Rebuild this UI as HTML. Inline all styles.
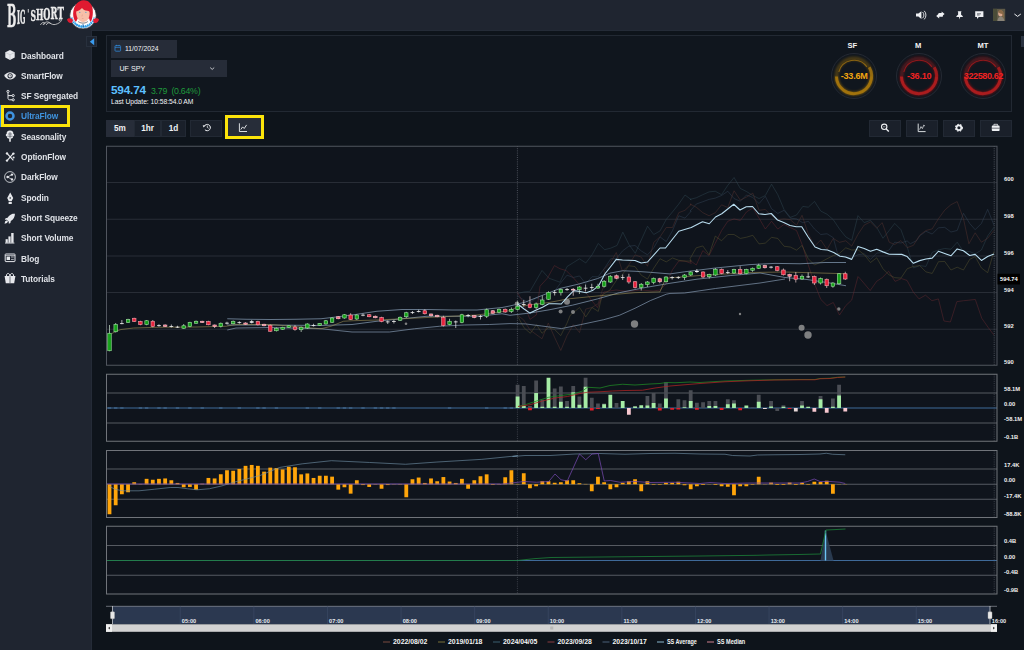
<!DOCTYPE html>
<html lang="en"><head><meta charset="utf-8"><title>UltraFlow</title>
<style>
html,body{margin:0;padding:0}
body{width:1024px;height:650px;overflow:hidden;position:relative;background:#0e141b;font-family:"Liberation Sans",sans-serif;color:#e4e7ec}
.abs{position:absolute}
#hdr{left:0;top:0;width:1024px;height:30.8px;background:#1f2530;border-bottom:1px solid #242b37;box-sizing:border-box}
#side{left:0;top:30px;width:92px;height:620px;background:#1f2530;border-right:1px solid #242b37;box-sizing:border-box}
.nav{position:absolute;left:20.5px;font-size:9px;font-weight:bold;color:#dfe2e7;letter-spacing:-0.1px;white-space:nowrap;line-height:10px;transform:scaleX(0.925);transform-origin:0 0}
.nav.act{color:#3f93df}
#toppanel{left:106px;top:35.2px;width:906px;height:76.6px;box-sizing:border-box;border:1px solid #222933;background:#10161e}
.inp{background:#262c38;box-sizing:border-box}
.btn{position:absolute;top:120.3px;height:16.4px;background:#1a202a;border:1px solid #222934;box-sizing:border-box;color:#f0f2f5;font-size:8.2px;font-weight:bold;text-align:center;line-height:16.2px}
svg{font-family:"Liberation Sans",sans-serif}
</style></head><body>
<div id="hdr" class="abs"></div>
<div id="side" class="abs">
  <div class="abs" style="left:0;top:74.5px;width:1.2px;height:22.5px;background:#2f8ee0"></div>
  <div class="nav" style="top:20.60px">Dashboard</div>
  <div class="nav" style="top:40.89px">SmartFlow</div>
  <div class="nav" style="top:61.18px">SF Segregated</div>
  <div class="nav act" style="top:81.47px">UltraFlow</div>
  <div class="nav" style="top:101.76px">Seasonality</div>
  <div class="nav" style="top:122.05px">OptionFlow</div>
  <div class="nav" style="top:142.34px">DarkFlow</div>
  <div class="nav" style="top:162.63px">Spodin</div>
  <div class="nav" style="top:182.92px">Short Squeeze</div>
  <div class="nav" style="top:203.21px">Short Volume</div>
  <div class="nav" style="top:223.50px">Blog</div>
  <div class="nav" style="top:243.79px">Tutorials</div>
</div>
<!-- highlight box around active nav -->
<div class="abs" style="left:1px;top:104.5px;width:69px;height:22.5px;box-sizing:border-box;border:3.6px solid #fce40a"></div>
<!-- collapse button -->
<div class="abs" style="left:86.2px;top:36.2px;width:10.8px;height:10.8px;box-sizing:border-box;background:#1e2531;border:1px solid #28303d"></div>

<div id="toppanel" class="abs"></div>
<div class="abs inp" style="left:111px;top:40px;width:66.2px;height:17.5px"></div>
<div class="abs" style="left:125px;top:44.6px;font-size:6.8px;color:#f2f4f7;line-height:8px;white-space:nowrap">11/07/2024</div>
<div class="abs inp" style="left:111px;top:60.3px;width:116px;height:16.6px"></div>
<div class="abs" style="left:119.5px;top:65.1px;font-size:7.1px;color:#f2f4f7;line-height:9px;white-space:nowrap">UF SPY</div>
<div class="abs" style="left:111px;top:83.5px;font-size:11.8px;font-weight:bold;color:#5cc0ff;line-height:13px;letter-spacing:-0.2px;white-space:nowrap">594.74</div>
<div class="abs" style="left:151px;top:86.2px;font-size:8.8px;color:#1f9a3c;line-height:10px;white-space:nowrap;letter-spacing:-0.27px">3.79&nbsp; (0.64%)</div>
<div class="abs" style="left:111px;top:98.2px;font-size:6.75px;color:#f2f4f7;line-height:8px;white-space:nowrap;letter-spacing:-0.05px">Last Update: 10:58:54.0 AM</div>

<!-- gauge labels -->
<div class="abs" style="left:832.3px;top:40.8px;width:40px;text-align:center;font-size:7.6px;font-weight:bold;color:#f4f4f4;line-height:9px">SF</div>
<div class="abs" style="left:898.2px;top:40.8px;width:40px;text-align:center;font-size:7.6px;font-weight:bold;color:#f4f4f4;line-height:9px">M</div>
<div class="abs" style="left:963px;top:40.8px;width:40px;text-align:center;font-size:7.6px;font-weight:bold;color:#f4f4f4;line-height:9px">MT</div>

<!-- toolbar buttons -->
<div class="btn" style="left:106px;width:27.8px;background:#272d39;border-color:#272d39">5m</div>
<div class="btn" style="left:133.8px;width:27.6px">1hr</div>
<div class="btn" style="left:161.3px;width:24.6px">1d</div>
<div class="btn" style="left:190.3px;width:32.2px"></div>
<div class="btn" style="left:227.5px;width:33.5px;top:118.2px;height:18.2px;background:#272d39;border-color:#272d39"></div>
<div class="abs" style="left:224.6px;top:114.9px;width:39.3px;height:24.2px;box-sizing:border-box;border:3.7px solid #fce40a"></div>
<div class="btn" style="left:869px;width:32px"></div>
<div class="btn" style="left:906px;width:32px"></div>
<div class="btn" style="left:943px;width:32px"></div>
<div class="btn" style="left:979.5px;width:32.5px"></div>
<!-- right scroll nub -->
<div class="abs" style="left:1020.5px;top:36px;width:3.5px;height:11px;background:#2a3240"></div>

<svg class="abs" style="left:0;top:0" width="1024" height="650" viewBox="0 0 1024 650">
<!-- LOGO -->
<filter id="fat" x="-5%" y="-5%" width="110%" height="110%"><feMorphology operator="dilate" radius="0.3 0.05"/></filter>
<g fill="#ececec" stroke="#ececec" stroke-width="0.35" filter="url(#fat)" style="font-family:'DejaVu Serif','Liberation Serif',serif;font-stretch:condensed;font-weight:bold">
  <g transform="translate(7.1,26.9) scale(0.385,1)"><text x="0" y="0" font-size="32">B</text></g>
  <g transform="translate(17,23.9) skewY(-3) scale(0.376,1)"><text x="0" y="0" font-size="18.8">IG</text></g>
  <g transform="translate(27.3,18.6) scale(0.6,1)"><text x="0" y="0" font-size="12" stroke="none">'</text></g>
  <g transform="translate(30.5,20.5) scale(0.56,1)"><text x="0" y="0"><tspan font-size="15">S</tspan><tspan font-size="15.600" dy="-0.45">H</tspan><tspan font-size="16.200" dy="-0.45">O</tspan><tspan font-size="16.800" dy="-0.45">R</tspan><tspan font-size="17.200" dy="-0.55">T</tspan></text></g>
</g>
<path d="M40.6,24.6 c0.8,-1.6 2.4,-2.6 3.8,-2 c1,0.5 0.6,1.9 -0.5,1.6 M43.2,24.6 c1.6,-2.8 4.4,-3.4 6.4,-1.800 c1.800,1.400 3.800,2.200 6,1.600 c2.800,-0.800 5,-2.200 5.800,-3.800 c0.600,-1.500 -1.200,-2.400 -2.200,-1.400 c-0.800,0.900 0,1.900 0.900,1.500 M46.400,24.600 c0.900,-1.900 2.900,-2.300 4,-1.400" fill="none" stroke="#dcdcdc" stroke-width="0.800" stroke-linecap="round"/>
<!-- mascot -->
<g>
  <circle cx="83" cy="15.600" r="13.300" fill="#fcfcfc" stroke="#15181e" stroke-width="0.700"/>
  <path d="M71.400,17.600 a12,12 0 0 0 23.200,0" fill="none" stroke="#2f9fe8" stroke-width="2.300" stroke-dasharray="1.500,0.700"/>
  <path d="M74.800,22.600 a10,10 0 0 0 16.400,0" fill="none" stroke="#2f9fe8" stroke-width="1.600" stroke-dasharray="1.200,0.800"/>
  <path d="M67,19.600 c1,-1.600 3.600,-1.800 5.600,-0.400 c0.600,1.600 0,3.200 -1.400,3.800 c-2,0.400 -3.800,-1.200 -4.200,-3.400 z" fill="#e01a30"/>
  <path d="M99,19.600 c-1,-1.600 -3.600,-1.800 -5.600,-0.400 c-0.600,1.600 0,3.200 1.400,3.800 c2,0.400 3.800,-1.200 4.200,-3.400 z" fill="#e01a30"/>
  <path d="M75.600,21.800 c-2.600,-3.200 -3.200,-8.800 -1.600,-13.400 c1.400,-4.200 4.400,-7.600 9.200,-8.200 c4.600,-0.400 7.800,2.600 9,6.600 c1.200,4.400 0.800,10.800 -1.400,15 c-0.800,-0.800 -1.400,-2 -1.600,-3.400 l-11.600,0 c-0.400,1.400 -1,2.600 -2,3.400 z" fill="#e01a30"/>
  <path d="M76.200,11.600 c2,-0.600 4.200,-1.800 5.800,-3.600 c1,1.600 3,2.600 5.400,2.800 c1.400,0.200 2,0.600 2.200,1.600 c0.200,2.400 -0.400,5 -1.600,6.800 c-1.200,1.700 -2.900,2.700 -4.800,2.700 c-2,0 -3.900,-1.200 -5.200,-3 c-1.300,-2 -1.900,-4.800 -1.800,-7.300 z" fill="#f7bfa8"/>
  <path d="M78.200,21.600 c1.600,1 3.200,1.500 4.800,1.500 c1.700,0 3.300,-0.500 4.800,-1.500" fill="none" stroke="#3a2420" stroke-width="0.600"/>
  <circle cx="79.800" cy="12.300" r="0.650" fill="#4f9ac8"/><circle cx="85.900" cy="12.300" r="0.650" fill="#4f9ac8"/>
  <path d="M82.400,14.500 l-0.500,2 M81.900,18.500 l1.600,0" stroke="#d8907c" stroke-width="0.500" fill="none"/>
  <path d="M83,24.200 l0.300,2.800" stroke="#1a6ab0" stroke-width="1"/>
</g>
<!-- header icons -->
<g fill="#eef0f3" stroke="none">
  <path d="M916,13.6 l2.4,0 l3,-2.4 l0,7.8 l-3,-2.4 l-2.4,0 z"/>
  <path d="M922.6,12 a4.4,4.4 0 0 1 0,6.2 M924.2,10.8 a6.2,6.2 0 0 1 0,8.6" fill="none" stroke="#eef0f3" stroke-width="0.9"/>
  <path d="M936.2,15.9 l3,-2.6 l0,1.7 l3.6,0 l0,1.8 l-3.6,0 l0,1.7 z" />
  <path d="M944.6,14 l-3,-2.6 l0,1.7 l-3,0 l0,1.8 l3,0 l0,1.7 z" />
  <path d="M957.6,11.2 l4,0 l-0.5,0.9 l0,2.6 c1,0.5 1.7,1.3 1.8,2.3 l-2.7,0 l-0.6,2.6 l-0.6,-2.6 l-2.7,0 c0.1,-1 0.8,-1.8 1.8,-2.3 l0,-2.6 z"/>
  <path d="M975.2,11.2 l8.2,0 l0,5.8 l-4.6,0 l-1.8,1.9 l0,-1.9 l-1.8,0 z"/>
</g>
<path d="M977,13.8 l4,0 M977,15 l2.6,0" stroke="#1f2530" stroke-width="0.6"/>
<rect x="993" y="8.8" width="12.2" height="12.2" fill="#5f5a48"/>
<rect x="993" y="8.8" width="4" height="12.2" fill="#4a4c38"/>
<ellipse cx="1000.6" cy="13.6" rx="2.4" ry="3" fill="#d8a890"/>
<path d="M997.4,21 c0.4,-3 1.8,-4.4 3.4,-4.4 c1.8,0 3.2,1.4 3.6,4.4 z" fill="#8a8478"/>
<path d="M998,12 c0.4,-2.6 4.6,-3 5.6,0.6 c0.6,2.4 0.2,5 -0.6,6.4 l-0.8,-5 c-1.2,0 -3,-0.8 -4.2,-2 z" fill="#8a6a48"/>
<path d="M1014.4,14 l3.2,2.4 l3.2,-2.4" fill="none" stroke="#eef0f3" stroke-width="1"/>
<!-- collapse triangle -->
<path d="M94.2,38.2 l0,7 l-4.4,-3.5 z" fill="#3a9bee"/>
<!-- calendar icon -->
<rect x="115" y="45.6" width="5.6" height="5.6" rx="0.8" fill="none" stroke="#2f86d6" stroke-width="0.8"/>
<path d="M115,47.4 l5.6,0 M116.5,44.8 l0,1.4 M119.1,44.8 l0,1.4" stroke="#2f86d6" stroke-width="0.7"/>
<!-- select chevron -->
<path d="M210.2,67.6 l2,1.8 l2,-1.8" fill="none" stroke="#e8eaee" stroke-width="0.8"/>
<!-- sidebar icons -->
<g fill="#e6e8ec" stroke="none">
  <!-- cube -->
  <path d="M10,50 l4.7,2.3 l0,5.3 l-4.7,2.4 l-4.7,-2.4 l0,-5.3 z"/>
  <path d="M5.6,52.6 l4.4,2.2 l4.4,-2.2 M10,54.8 l0,5" fill="none" stroke="#aeb3bb" stroke-width="0.5"/>
  <!-- eye -->
  <path d="M4.2,75.8 c2.6,-4.8 9.2,-4.8 11.8,0 c-2.6,4.8 -9.2,4.8 -11.8,0 z"/>
  <circle cx="10.1" cy="75.8" r="2.6" fill="#1f2530"/>
  <circle cx="10.1" cy="75.8" r="1.7" fill="#e6e8ec"/>
  <path d="M10.1,74.6 l0,1.3 l1,0" stroke="#1f2530" stroke-width="0.5" fill="none"/>
</g>
<!-- branch icon (SF Segregated) -->
<g fill="none" stroke="#e6e8ec" stroke-width="1">
  <path d="M8,92.6 l0,5.6 c0,1 0.6,1.6 1.6,1.6 l2.6,0 M8,95.6 l4.2,0"/>
  <circle cx="8" cy="91.4" r="1.1"/><circle cx="13.2" cy="95.6" r="1.1"/><circle cx="13.2" cy="99.8" r="1.1"/>
</g>
<!-- UltraFlow ring -->
<circle cx="10" cy="116" r="3.5" fill="none" stroke="#3f93df" stroke-width="2.5"/>
<!-- Seasonality (tree) -->
<g fill="#e6e8ec">
  <path d="M10,130.6 c2.4,0 3.6,1.4 3.2,2.8 c1.4,0.6 1.4,2.6 -0.2,3.2 c0.4,1.4 -1,2.2 -2.2,1.6 l0,3.6 l-1.6,0 l0,-3.6 c-1.2,0.6 -2.6,-0.2 -2.2,-1.6 c-1.6,-0.6 -1.6,-2.6 -0.2,-3.2 c-0.4,-1.4 0.8,-2.8 3.2,-2.8 z"/>
</g>
<path d="M8,134 l4,0 M7.4,136.2 l5.2,0 M10,132 l0,6" stroke="#1f2530" stroke-width="0.5"/>
<!-- OptionFlow (x nodes) -->
<g stroke="#e6e8ec" stroke-width="1.2" fill="#e6e8ec">
  <path d="M7,153.4 l6.4,7 M13.2,153.6 l-6.2,7" fill="none"/>
  <circle cx="7" cy="153.4" r="1.2" stroke="none"/><circle cx="13.4" cy="153.6" r="1.2" stroke="none"/><circle cx="7" cy="160.6" r="1.2" stroke="none"/><circle cx="13.6" cy="157.6" r="1" stroke="none"/>
</g>
<!-- DarkFlow (share in circle) -->
<circle cx="10" cy="177" r="5.4" fill="none" stroke="#e6e8ec" stroke-width="0.8"/>
<g fill="#e6e8ec"><circle cx="7.6" cy="177" r="1.2"/><circle cx="12" cy="174.6" r="1.2"/><circle cx="12" cy="179.4" r="1.2"/></g>
<path d="M12,174.6 l-4.4,2.4 l4.4,2.4" fill="none" stroke="#e6e8ec" stroke-width="0.7"/>
<!-- Spodin (pen nib) -->
<path d="M10.2,192.6 l3,5.4 l-1.6,3.2 l-2.8,0 l-1.6,-3.2 z M8.6,202 l3.2,0 l0,2 l-3.2,0 z" fill="#e6e8ec"/>
<circle cx="10.2" cy="198" r="0.8" fill="#1f2530"/>
<!-- rocket -->
<path d="M15,213.2 c-3.4,0.2 -5.8,2 -7.4,4.6 l-2,0.4 l-0.8,1.6 l2,0 l2,2 l0,2 l1.6,-0.8 l0.4,-2 c2.6,-1.6 4.2,-4 4.2,-7.800 z" fill="#e6e8ec"/>
<path d="M5.2,221.200 l1.800,-1 l1,1 l-1,1.800 l-2.400,0.800 z" fill="#e6e8ec"/>
<!-- short volume bars -->
<g fill="#e6e8ec"><rect x="5.6" y="239.2" width="2.2" height="3.600"/><rect x="8.4" y="236.400" width="2.2" height="6.4"/><rect x="11.2" y="233" width="2.4" height="9.8"/><rect x="5" y="242.600" width="9.4" height="0.900"/></g>
<!-- blog -->
<rect x="5.2" y="254" width="9.800" height="7.600" rx="0.6" fill="none" stroke="#e6e8ec" stroke-width="1"/>
<rect x="6.600" y="256.600" width="3.400" height="3.400" fill="#e6e8ec"/><path d="M11,257 l2.800,0 M11,259.400 l2.800,0 M5.200,255.600 l9.800,0" stroke="#e6e8ec" stroke-width="0.700"/>
<!-- tutorials (box/bag) -->
<path d="M4.600,276 l10.800,0 l-1.200,7.200 l-8.400,0 z" fill="#e6e8ec"/>
<path d="M6.400,276 c0,-3.400 3.200,-3.400 3.600,0 c0.400,-3.400 3.600,-3.400 3.600,0" fill="none" stroke="#e6e8ec" stroke-width="1"/>
<path d="M10,276.400 l0,6.600" stroke="#1f2530" stroke-width="0.600"/>
<!-- toolbar icons -->
<path d="M204.300,126.400 A3.150,3.150 0 1 1 204.900,129.700" fill="none" stroke="#eef0f3" stroke-width="1"/>
<path d="M207.300,125.500 l0,2 l1.300,0.800" fill="none" stroke="#eef0f3" stroke-width="0.750"/>
<path d="M202.700,125.200 l2.600,0.300 l-1.700,2 z" fill="#eef0f3"/>
<path d="M239.400,123.300 l0,8.200 l7.600,0" fill="none" stroke="#eef0f3" stroke-width="0.900"/>
<path d="M240.800,129.500 l1.800,-2.600 l1.600,1.600 l2.400,-3.600" fill="none" stroke="#eef0f3" stroke-width="0.900"/>
<!-- zoom -->
<circle cx="884.200" cy="126.800" r="2.700" fill="none" stroke="#eef0f3" stroke-width="1.100"/>
<path d="M886.200,128.900 l2.600,2.600" stroke="#eef0f3" stroke-width="1.400"/>
<path d="M883,126.800 l2.400,0" stroke="#eef0f3" stroke-width="0.600"/>
<!-- chart2 -->
<path d="M918.200,123.600 l0,8 l7.400,0" fill="none" stroke="#eef0f3" stroke-width="0.900"/>
<path d="M919.600,129.600 l1.400,-3 l1.400,2 l1.400,-3.600 l1.200,1.200" fill="none" stroke="#eef0f3" stroke-width="0.700"/>
<!-- gear -->
<circle cx="958.900" cy="127.800" r="2.400" fill="none" stroke="#eef0f3" stroke-width="1.700"/>
<circle cx="958.900" cy="127.800" r="3.500" fill="none" stroke="#eef0f3" stroke-width="1.100" stroke-dasharray="1.450,1.450"/>
<!-- briefcase -->
<rect x="991.800" y="125.600" width="7.800" height="5.400" rx="0.800" fill="#eef0f3"/>
<path d="M993.900,125.600 l0,-1.300 l3.600,0 l0,1.300" fill="none" stroke="#eef0f3" stroke-width="0.800"/>
<path d="M991.800,128.200 l7.800,0" stroke="#1a202a" stroke-width="0.600"/>
<!-- gauges -->
<g fill="none">
  <circle cx="854" cy="76" r="22.500" stroke="#2a2f39" stroke-width="0.800"/>
  <circle cx="919" cy="76" r="22.500" stroke="#2a2f39" stroke-width="0.800"/>
  <circle cx="983" cy="76" r="22.500" stroke="#2a2f39" stroke-width="0.800"/>
</g>
<defs>
  <filter id="gl" x="-30%" y="-30%" width="160%" height="160%"><feGaussianBlur stdDeviation="1.100"/></filter>
</defs>
<g fill="none" stroke-linecap="butt">
  <g stroke="#cf8f0c">
    <circle cx="854" cy="76" r="17.300" stroke-width="4.200" stroke-opacity="0.280" filter="url(#gl)"/>
    <path d="M836.4,76.5 A17.600,17.600 0 1 0 869.24,67.20" stroke-width="3" stroke-opacity="0.600"/>
    <path d="M836.4,76.5 A17.600,17.600 0 0 0 871.6,76.5" stroke-width="3.600" stroke-opacity="0.250" filter="url(#gl)"/>
    <path d="M838.8,72 A15.800,15.800 0 0 1 866.90,66.90" stroke-width="1.100" stroke-opacity="0.550"/>
  </g>
  <g stroke="#dc1a1a">
    <circle cx="919" cy="76" r="17.300" stroke-width="4.200" stroke-opacity="0.280" filter="url(#gl)"/>
    <path d="M901.4,76.5 A17.600,17.600 0 1 0 934.24,67.20" stroke-width="3" stroke-opacity="0.600"/>
    <path d="M901.4,76.5 A17.600,17.600 0 0 0 936.6,76.5" stroke-width="3.600" stroke-opacity="0.250" filter="url(#gl)"/>
    <path d="M903.8,72 A15.800,15.800 0 0 1 931.90,66.90" stroke-width="1.100" stroke-opacity="0.550"/>
  </g>
  <g stroke="#dc1a1a">
    <circle cx="983" cy="76" r="17.300" stroke-width="4.200" stroke-opacity="0.280" filter="url(#gl)"/>
    <path d="M965.4,76.5 A17.600,17.600 0 1 0 998.24,67.20" stroke-width="3" stroke-opacity="0.600"/>
    <path d="M965.4,76.5 A17.600,17.600 0 0 0 1000.6,76.5" stroke-width="3.600" stroke-opacity="0.250" filter="url(#gl)"/>
    <path d="M967.8,72 A15.800,15.800 0 0 1 995.90,66.90" stroke-width="1.100" stroke-opacity="0.550"/>
  </g>
</g>
<g font-weight="bold" font-size="9.100" text-anchor="middle">
  <text x="854.200" y="78.600" fill="#f0a510" letter-spacing="-0.200">-33.6M</text>
  <text x="919.200" y="78.600" fill="#ee2222" letter-spacing="-0.200">-36.10</text>
  <text x="983.400" y="78.600" fill="#ee2222" letter-spacing="-0.420">322580.62</text>
</g>

<rect x="106" y="146" width="891" height="219.5" fill="#0f141c"/>
<line x1="106" x2="997" y1="182.5" y2="182.5" stroke="#282d36" stroke-width="1"/>
<line x1="106" x2="997" y1="219.25" y2="219.25" stroke="#282d36" stroke-width="1"/>
<line x1="106" x2="997" y1="256" y2="256" stroke="#282d36" stroke-width="1"/>
<line x1="106" x2="997" y1="292.5" y2="292.5" stroke="#282d36" stroke-width="1"/>
<line x1="106" x2="997" y1="329.25" y2="329.25" stroke="#282d36" stroke-width="1"/>
<line x1="517.4" x2="517.4" y1="146" y2="365.5" stroke="#5a606a" stroke-width="0.8" stroke-dasharray="1,1.2"/>
<line x1="994.2" x2="994.2" y1="146" y2="365.5" stroke="#5a606a" stroke-width="0.8" stroke-dasharray="1,1.2"/>
<polyline points="517.5,293.75 523.75,291.9 530,291.25 542.03,270.47 549.06,278.28 560,282.19 567.03,266.56 573.28,262.66 579.53,258.75 585.78,262.97 592.03,254.84 598.28,243.44 604.53,249.69 610.78,248.12 617.03,245.47 622.81,232.19 629.06,244.69 635.31,253.28 641.25,240 647.5,226.25 653.75,234.53 660,230.94 666.25,219.38 672.5,211.88 678.75,204.06 685,195 691.25,199.69 690,199.38 696.25,197.81 702.81,194.69 709.06,191.88 715.31,191.25 721.56,194.69 727.81,185.31 734.06,177.5 740.31,188.44 746.56,191.56 752.81,195.47 759.06,198.59 765.31,195.47 771.56,184.22 777.81,194.69 784.06,209.53 790.31,217.34 796.56,215 802.81,206.41 808.28,207.19 814.53,201.41 820.78,211.09 827.03,214.22 833.28,219.69 839.53,229.06 845.78,236.88 851.72,240.31 857.97,215.62 864.22,222.66 870.47,220.31 876.72,227.34 882.97,238.28 889.22,230.47 894.69,223.44 900.94,229.69 907.19,246.88 913.44,267.97 919.69,265.62 925.94,266.41 932.19,252.34 938.44,250 944.69,248.44 950.94,249.22 957.19,242.19 963.44,251.56 969.69,251.56 975.16,253.91 981.41,250 987.66,235.94 993.91,227.34" fill="none" stroke="#314a55" stroke-width="0.9" stroke-opacity="0.5" stroke-linejoin="round" />
<polyline points="517.5,296 524,300 530,303 536,298 542,300 548,296 554,292 560,283.75 567.03,275.16 573.28,277.5 579.53,275.94 585.78,283.75 592.03,276.72 598.28,276.72 604.53,268.12 610.78,258.75 616.25,258.75 622.5,250.94 628.75,246.25 635,245.47 641.25,250.94 647.5,254.84 653.75,247.81 660,236.88 666.25,241.56 672.5,230.62 678.75,215.78 685,218.12 691.25,211.09 690,211.09 696.25,204.06 702.81,201.72 709.06,199.38 715.31,198.12 721.56,195.47 727.81,191.25 734.06,198.59 740.31,201.25 746.56,195 752.81,197.5 759.06,203.59 765.31,196.25 771.56,208.75 777.81,213.44 784.06,210.31 790.31,218.12 796.56,218.91 802.81,222.81 808.28,221.25 814.53,229.06 820.78,234.53 827.03,233.75 833.28,237.66 837.66,254.06 845.78,257.19 851.72,257.81 857.97,254.69 864.22,253.91 870.47,259.38 876.72,253.12 882.97,252.34 889.22,250 894.69,242.19 900.94,242.97 907.19,240.94 910.31,243.75 916.56,240.62 919.69,235.94 925.94,231.25 932.19,234.06 938.44,227.81 944.69,227.34 950.94,232.03 957.19,230.47 963.44,213.28 969.69,223.44 975.16,229.69 981.41,223.44 987.66,209.38 993.91,225" fill="none" stroke="#35465a" stroke-width="0.9" stroke-opacity="0.5" stroke-linejoin="round" />
<polyline points="517.5,292.5 523.75,303.75 530,319.4 536.25,315 540,286.25 547.5,278 554.4,265.6 560,268.75 566.25,270.6 572.5,276.9 578.75,283.75 585,291.25 591.25,300 597.5,307.5 603.75,292 616,290 628,291.5 641,290 653,291 660,290 666.25,283.75 672.5,269.69 678.75,261.09 685,261.09 691.25,263.44 690,260.31 696.25,265 702.81,250.62 709.06,255.62 715.31,243.12 721.56,230.62 727.81,221.25 734.06,218.91 740.31,220.47 746.56,211.88 752.81,207.97 759.06,218.12 765.31,229.06 771.56,221.25 777.81,229.06 784.06,224.38 790.31,227.5 796.56,230.62 802.81,246.25 808.28,265 814.53,283.75 820.78,299.38 827.03,305.62 833.28,302.5 839.53,315 845.78,305.62 851.72,300 857.97,276.56 860,278.6 870.15,290.59 876.61,281.37 882.14,277.68 888.6,271.22 895.06,281.37 901.51,278.6 907.05,280.44 913.51,292.44 919.04,298.89 925.5,295.2 931.96,300.74 938.41,298.89 943.95,321.03 950.41,321.96 956.86,301.66 963.32,300.74 968.86,300.18 975.31,299.45 981.77,318.27 988.23,327.49 993.76,334.87" fill="none" stroke="#6a2a30" stroke-width="0.9" stroke-opacity="0.5" stroke-linejoin="round" />
<polyline points="517.5,315 523.75,320 530,330 542.03,338.75 548.28,323.12 554.53,337.19 560.78,350.47 567.03,335.62 573.28,324.69 579.53,332.5 585.78,309.06 592.03,307.5 598.28,303.59 602.19,290.31 606.88,279.38 603.75,269.69 610,263.44 616.25,252.5 622.5,271.25 628.75,265 635,254.84 641.25,257.19 647.5,266.25 653.75,242.34 660,236.88 666.25,227.5 672.5,227.5 678.75,212.66 685,210.31 691.25,204.38 690,204.06 696.25,207.19 702.81,212.66 709.06,215.78 715.31,212.66 721.56,204.84 727.81,207.5 734.06,190.78 740.31,200.16 746.56,197.03 752.81,193.12 759.06,210.31 765.31,209.53 771.56,215.78 777.81,219.69 784.06,218.91 790.31,219.69 796.56,225.16 802.03,215.31 808.28,233.75 814.53,246.25 820.78,240 827.03,249.38 833.28,238.44 839.53,242.34 845.78,240.78 851.72,246.09 857.97,234.38 864.22,225 870.47,221.88 876.72,228.12 882.19,222.66 889.22,242.19 894.69,244.53 900.94,240.62 907.19,247.66 913.44,245.31 919.69,235.16 925.94,230.47 932.19,228.91 938.44,218.75 944.69,210.16 950.94,204.69 957.19,201.56 963.44,218.75 968.91,243.75 975.16,232.81 981.41,242.19 987.66,238.28 993.91,230.47" fill="none" stroke="#5a3530" stroke-width="0.9" stroke-opacity="0.5" stroke-linejoin="round" />
<polyline points="517.5,316 524.06,327.81 530.31,333.28 536.56,324.69 542.03,333.28 548.28,327.81 554.53,329.38 560.78,335.62 567.03,323.12 570.16,315.31 579.53,307.5 585.78,316.88 592.03,307.5 598.28,311.41 602.19,295 610,290 616.25,280.62 622.5,274.38 628.75,265.78 635,266.56 641.25,275.16 647.5,279.06 653.75,268.12 660,258.75 666.25,261.88 672.5,257.97 678.75,260.31 685,261.09 691.25,261.09 690,258.75 696.25,247.81 702.81,245.94 709.06,254.84 715.31,236.09 721.56,240.78 727.81,234.53 734.06,234.53 740.31,238.44 746.56,237.19 752.81,235.31 759.06,243.91 765.31,243.12 771.56,237.34 777.81,238.44 784.06,246.25 790.31,247.03 796.56,250.16 802.03,245.47 808.28,258.75 814.53,265 820.78,262.19 827.03,258.75 833.28,255.62 839.53,253.28 845.78,247.81 851.72,250 857.97,249.69 864.22,254.69 870.47,262.5 876.72,257.81 882.97,268.75 889.22,275 894.69,277.66 900.94,278.12 907.19,268.75 913.44,266.41 919.69,265.62 925.94,271.88 932.19,273.44 938.44,261.72 944.69,261.41 950.94,270 957.19,267.19 963.44,270 969.69,259.38 975.16,256.56 981.41,267.97 987.66,272.66 993.91,251.56" fill="none" stroke="#5e5830" stroke-width="0.9" stroke-opacity="0.5" stroke-linejoin="round" />
<polyline points="227.25,318.75 246,319.25 271,319.5 296,319.25 321,318.75 336,317 352,315 377,311.25 402,309.5 427,309.5 452,310 477,310 502,307.5 510,305.94 525.62,302.03 541.25,295.78 560,288.44 578.75,284.06 597.5,278.59 610,273.12 622.5,270.78 635,271.25 650.62,272.34 670,273.91 684.6,271.8 715.4,268 750,264.6 775,263.4 800,263.75 825,262.5 846,262.5" fill="none" stroke="#8fa6bf" stroke-width="0.8" stroke-opacity="0.85" stroke-linejoin="round" />
<polyline points="227.25,325 271,325 321,325.5 352,324.5 377,321.25 402,318.75 427,316.25 452,316.25 477,316.25 502,313.75 510,315.31 530.31,312.97 549.06,309.84 572.5,305.16 597.5,298.91 619.38,292.66 642.81,287.97 670,283.28 697,279.2 730.8,275.5 760,273 785,277.5 807,279.5 830,283 846,285.75" fill="none" stroke="#8fa6bf" stroke-width="0.8" stroke-opacity="0.85" stroke-linejoin="round" />
<polyline points="227.25,330 236,328 271,327.5 321,328.75 352,332 389.5,332 414.5,328.75 439.5,326.25 464.5,325 489.5,324.5 510,323.59 525.62,323.91 541.25,325.94 561.56,328.59 580.31,324.69 603.75,319.69 619.38,315.31 635,308.28 650.62,300.47 666.25,294.22 670,293.44 684.6,293 715.4,288.5 760,283 785,279" fill="none" stroke="#8fa6bf" stroke-width="0.8" stroke-opacity="0.8" stroke-linejoin="round" />
<polyline points="111.5,333.75 116,331.25 121,329.5 133.5,328 158.5,327.25 196,327 226,326.25 236,324.5 271,324.5 321,328.75 331,326.25 343.5,321.25 352,320.75 377,320 427,317.5 477,315 510,310.62 517.81,306.72 533.44,304.38 549.06,302.5 567.81,298.91 588.12,296.88 611.56,294.69 635,292.66 660,291.88 663.91,282.5 666.25,278.59 670,277.81 700,275.5 750,272.5 785,272 846,273.75" fill="none" stroke="#a89858" stroke-width="0.65" stroke-opacity="0.85" stroke-linejoin="round" />
<circle cx="517" cy="303.75" r="2.3" fill="#9a9a9a" fill-opacity="0.8"/>
<circle cx="567" cy="301.7" r="3" fill="#9a9a9a" fill-opacity="0.8"/>
<circle cx="560.6" cy="311.5" r="2" fill="#9a9a9a" fill-opacity="0.8"/>
<circle cx="573" cy="312" r="2" fill="#9a9a9a" fill-opacity="0.8"/>
<circle cx="634.5" cy="324" r="3.7" fill="#9a9a9a" fill-opacity="0.8"/>
<circle cx="740" cy="314" r="1.2" fill="#9a9a9a" fill-opacity="0.8"/>
<circle cx="838.8" cy="309" r="1.7" fill="#9a9a9a" fill-opacity="0.8"/>
<circle cx="801.6" cy="327.7" r="3" fill="#9a9a9a" fill-opacity="0.8"/>
<circle cx="808" cy="335" r="3.7" fill="#9a9a9a" fill-opacity="0.8"/>
<circle cx="406" cy="323.75" r="1.3" fill="#9a9a9a" fill-opacity="0.8"/>
<polyline points="517.5,303.75 523.75,308.75 530,313.1 536.25,310 542.5,307.25 548.75,303.75 555,303.75 561.25,304 567.5,296.9 573.75,290.6 580,291.5 586.25,292.75 592.5,290.6 598.75,285.6 605,273.75 610,267.5 616.25,259.4 622.5,260 635,260.5 641.25,263 647.5,262 660,248 665.5,248 678.75,231.25 691.25,227.5 702.5,221.75 709.25,223.75 715.5,217 721.75,213.75 733.75,204.25 740,210 746.25,206.75 752.5,206.5 758.75,213.75 765,214.5 771.25,213.5 777.5,220 783.75,222.5 790,225.5 796.25,226.75 801.75,226.75 808,236.75 815,247 821.25,249.5 827.5,250 833.75,252.5 840,256.25 845.47,257.03 851.72,259.38 857.97,246.41 864.22,248.44 870.47,251.25 876.72,249.22 882.97,251.88 889.22,254.22 901.72,254.38 907.19,256.56 913.44,263.28 919.69,260.62 925.94,259.06 932.19,258.12 938.44,251.25 944.69,253.59 950.94,255.78 957.19,248.91 963.44,250.78 969.69,255.47 975.16,254.38 981.41,260.47 987.66,256.56 993.91,253.91" fill="none" stroke="#b8dcee" stroke-width="1.1" stroke-opacity="1" stroke-linejoin="round" />
<line x1="109.5" x2="109.5" y1="325" y2="351.25" stroke="#cfe8cf" stroke-width="0.7"/>
<rect x="107.75" y="333.25" width="3.5" height="17.5" fill="#16a01a" stroke="#9fe0a0" stroke-width="0.6"/>
<line x1="115.68" x2="115.68" y1="323" y2="332.5" stroke="#cfe8cf" stroke-width="0.7"/>
<rect x="113.93" y="324.5" width="3.5" height="7.25" fill="#16a01a" stroke="#9fe0a0" stroke-width="0.6"/>
<line x1="121.87" x2="121.87" y1="320" y2="324.25" stroke="#e8e8e8" stroke-width="0.7"/>
<rect x="119.97" y="323.25" width="3.8" height="0.8" fill="#f4f4f4"/>
<line x1="128.05" x2="128.05" y1="318.75" y2="323" stroke="#cfe8cf" stroke-width="0.7"/>
<rect x="126.3" y="319.5" width="3.5" height="3" fill="#16a01a" stroke="#9fe0a0" stroke-width="0.6"/>
<line x1="134.23" x2="134.23" y1="317.75" y2="322" stroke="#f0d0d0" stroke-width="0.7"/>
<rect x="132.48" y="318.25" width="3.5" height="3.25" fill="#e8243e" stroke="#f5a0aa" stroke-width="0.6"/>
<line x1="140.41" x2="140.41" y1="320.75" y2="325.25" stroke="#f0d0d0" stroke-width="0.7"/>
<rect x="138.66" y="321.5" width="3.5" height="3" fill="#e8243e" stroke="#f5a0aa" stroke-width="0.6"/>
<line x1="146.6" x2="146.6" y1="320" y2="325.25" stroke="#cfe8cf" stroke-width="0.7"/>
<rect x="144.85" y="320.75" width="3.5" height="3.75" fill="#16a01a" stroke="#9fe0a0" stroke-width="0.6"/>
<line x1="152.78" x2="152.78" y1="320" y2="327.25" stroke="#f0d0d0" stroke-width="0.7"/>
<rect x="151.03" y="321.25" width="3.5" height="5.25" fill="#e8243e" stroke="#f5a0aa" stroke-width="0.6"/>
<line x1="158.96" x2="158.96" y1="324.25" y2="326.75" stroke="#e8e8e8" stroke-width="0.7"/>
<rect x="157.06" y="325.25" width="3.8" height="0.8" fill="#f4f4f4"/>
<line x1="165.15" x2="165.15" y1="324.25" y2="327" stroke="#f0d8d8" stroke-width="0.7"/>
<rect x="163.4" y="325" width="3.5" height="1.5" fill="#f07080" stroke="#f8c0c8" stroke-width="0.6"/>
<line x1="171.33" x2="171.33" y1="324.5" y2="327.5" stroke="#e8e8e8" stroke-width="0.7"/>
<rect x="169.43" y="326" width="3.8" height="0.8" fill="#f4f4f4"/>
<line x1="177.51" x2="177.51" y1="325.75" y2="328" stroke="#e8e8e8" stroke-width="0.7"/>
<rect x="175.61" y="326.75" width="3.8" height="0.8" fill="#f4f4f4"/>
<line x1="183.7" x2="183.7" y1="324" y2="328.75" stroke="#cfe8cf" stroke-width="0.7"/>
<rect x="181.95" y="325.75" width="3.5" height="2.5" fill="#16a01a" stroke="#9fe0a0" stroke-width="0.6"/>
<line x1="189.88" x2="189.88" y1="321.75" y2="327.25" stroke="#cfe8cf" stroke-width="0.7"/>
<rect x="188.13" y="322.5" width="3.5" height="4" fill="#16a01a" stroke="#9fe0a0" stroke-width="0.6"/>
<line x1="196.06" x2="196.06" y1="320.5" y2="323.75" stroke="#cfe8cf" stroke-width="0.7"/>
<rect x="194.31" y="321.25" width="3.5" height="2" fill="#16a01a" stroke="#9fe0a0" stroke-width="0.6"/>
<line x1="202.25" x2="202.25" y1="320.75" y2="323" stroke="#f0d8d8" stroke-width="0.7"/>
<rect x="200.5" y="321.25" width="3.5" height="1.25" fill="#f07080" stroke="#f8c0c8" stroke-width="0.6"/>
<line x1="208.43" x2="208.43" y1="320.75" y2="325.25" stroke="#f0d0d0" stroke-width="0.7"/>
<rect x="206.68" y="321.5" width="3.5" height="3.25" fill="#e8243e" stroke="#f5a0aa" stroke-width="0.6"/>
<line x1="214.61" x2="214.61" y1="324.5" y2="328" stroke="#f0d8d8" stroke-width="0.7"/>
<rect x="212.86" y="325" width="3.5" height="1.5" fill="#f07080" stroke="#f8c0c8" stroke-width="0.6"/>
<line x1="220.79" x2="220.79" y1="322.5" y2="327.5" stroke="#cfe8cf" stroke-width="0.7"/>
<rect x="219.04" y="323.25" width="3.5" height="3.25" fill="#16a01a" stroke="#9fe0a0" stroke-width="0.6"/>
<line x1="226.98" x2="226.98" y1="321.75" y2="324.5" stroke="#e8e8e8" stroke-width="0.7"/>
<rect x="225.08" y="322.75" width="3.8" height="0.8" fill="#f4f4f4"/>
<line x1="233.16" x2="233.16" y1="320.5" y2="324.25" stroke="#cfe8cf" stroke-width="0.7"/>
<rect x="231.41" y="321.25" width="3.5" height="2.5" fill="#16a01a" stroke="#9fe0a0" stroke-width="0.6"/>
<line x1="239.34" x2="239.34" y1="321.25" y2="323.75" stroke="#e8e8e8" stroke-width="0.7"/>
<rect x="237.44" y="322.25" width="3.8" height="0.8" fill="#f4f4f4"/>
<line x1="245.53" x2="245.53" y1="322.25" y2="324.75" stroke="#f0d8d8" stroke-width="0.7"/>
<rect x="243.78" y="323" width="3.5" height="1.25" fill="#f07080" stroke="#f8c0c8" stroke-width="0.6"/>
<line x1="251.71" x2="251.71" y1="320" y2="323.5" stroke="#e8e8e8" stroke-width="0.7"/>
<rect x="249.81" y="321.25" width="3.8" height="1.5" fill="#f4f4f4"/>
<line x1="257.89" x2="257.89" y1="320.75" y2="325.5" stroke="#f0d0d0" stroke-width="0.7"/>
<rect x="256.14" y="321.5" width="3.5" height="3.25" fill="#e8243e" stroke="#f5a0aa" stroke-width="0.6"/>
<line x1="264.07" x2="264.07" y1="323.75" y2="326.25" stroke="#f0d8d8" stroke-width="0.7"/>
<rect x="262.32" y="324.25" width="3.5" height="1.5" fill="#f07080" stroke="#f8c0c8" stroke-width="0.6"/>
<line x1="270.26" x2="270.26" y1="324.5" y2="332" stroke="#f0d0d0" stroke-width="0.7"/>
<rect x="268.51" y="325.25" width="3.5" height="6" fill="#e8243e" stroke="#f5a0aa" stroke-width="0.6"/>
<line x1="276.44" x2="276.44" y1="327.5" y2="331.5" stroke="#cfe8cf" stroke-width="0.7"/>
<rect x="274.69" y="328.25" width="3.5" height="2.5" fill="#16a01a" stroke="#9fe0a0" stroke-width="0.6"/>
<line x1="282.62" x2="282.62" y1="326.75" y2="329.75" stroke="#cfe8cf" stroke-width="0.7"/>
<rect x="280.87" y="327.25" width="3.5" height="2" fill="#16a01a" stroke="#9fe0a0" stroke-width="0.6"/>
<line x1="288.81" x2="288.81" y1="325.25" y2="328" stroke="#cfe8cf" stroke-width="0.7"/>
<rect x="287.06" y="325.75" width="3.5" height="1.75" fill="#16a01a" stroke="#9fe0a0" stroke-width="0.6"/>
<line x1="294.99" x2="294.99" y1="325" y2="330.75" stroke="#f0d0d0" stroke-width="0.7"/>
<rect x="293.24" y="327" width="3.5" height="2.5" fill="#e8243e" stroke="#f5a0aa" stroke-width="0.6"/>
<line x1="301.17" x2="301.17" y1="326.5" y2="332" stroke="#cfe8cf" stroke-width="0.7"/>
<rect x="299.42" y="327.25" width="3.5" height="2.5" fill="#16a01a" stroke="#9fe0a0" stroke-width="0.6"/>
<line x1="307.36" x2="307.36" y1="323.25" y2="328.75" stroke="#cfe8cf" stroke-width="0.7"/>
<rect x="305.61" y="324" width="3.5" height="4" fill="#16a01a" stroke="#9fe0a0" stroke-width="0.6"/>
<line x1="313.54" x2="313.54" y1="323.75" y2="326.5" stroke="#e8e8e8" stroke-width="0.7"/>
<rect x="311.64" y="325.25" width="3.8" height="0.8" fill="#f4f4f4"/>
<line x1="319.72" x2="319.72" y1="323" y2="325.75" stroke="#cfe8cf" stroke-width="0.7"/>
<rect x="317.97" y="323.5" width="3.5" height="1.75" fill="#16a01a" stroke="#9fe0a0" stroke-width="0.6"/>
<line x1="325.9" x2="325.9" y1="320" y2="324.5" stroke="#cfe8cf" stroke-width="0.7"/>
<rect x="324.15" y="320.75" width="3.5" height="3.25" fill="#16a01a" stroke="#9fe0a0" stroke-width="0.6"/>
<line x1="332.09" x2="332.09" y1="317.25" y2="323" stroke="#cfe8cf" stroke-width="0.7"/>
<rect x="330.34" y="318" width="3.5" height="4.25" fill="#16a01a" stroke="#9fe0a0" stroke-width="0.6"/>
<line x1="338.27" x2="338.27" y1="316" y2="319.25" stroke="#f0d8d8" stroke-width="0.7"/>
<rect x="336.52" y="316.75" width="3.5" height="2" fill="#f07080" stroke="#f8c0c8" stroke-width="0.6"/>
<line x1="344.45" x2="344.45" y1="314" y2="318.75" stroke="#cfe8cf" stroke-width="0.7"/>
<rect x="342.7" y="314.75" width="3.5" height="3.25" fill="#16a01a" stroke="#9fe0a0" stroke-width="0.6"/>
<line x1="350.64" x2="350.64" y1="313.25" y2="320" stroke="#f0d0d0" stroke-width="0.7"/>
<rect x="348.89" y="315" width="3.5" height="4.5" fill="#e8243e" stroke="#f5a0aa" stroke-width="0.6"/>
<line x1="356.82" x2="356.82" y1="314.25" y2="320" stroke="#cfe8cf" stroke-width="0.7"/>
<rect x="355.07" y="315" width="3.5" height="4" fill="#16a01a" stroke="#9fe0a0" stroke-width="0.6"/>
<line x1="363" x2="363" y1="313.5" y2="316.25" stroke="#e8e8e8" stroke-width="0.7"/>
<rect x="361.1" y="314.75" width="3.8" height="0.8" fill="#f4f4f4"/>
<line x1="369.19" x2="369.19" y1="314" y2="317.25" stroke="#f0d0d0" stroke-width="0.7"/>
<rect x="367.44" y="314.75" width="3.5" height="2" fill="#e8243e" stroke="#f5a0aa" stroke-width="0.6"/>
<line x1="375.37" x2="375.37" y1="315.5" y2="318.25" stroke="#f0d8d8" stroke-width="0.7"/>
<rect x="373.62" y="316.25" width="3.5" height="1.5" fill="#f07080" stroke="#f8c0c8" stroke-width="0.6"/>
<line x1="381.55" x2="381.55" y1="316.75" y2="322.25" stroke="#f0d0d0" stroke-width="0.7"/>
<rect x="379.8" y="317.5" width="3.5" height="4" fill="#e8243e" stroke="#f5a0aa" stroke-width="0.6"/>
<line x1="387.74" x2="387.74" y1="320.5" y2="324" stroke="#e8e8e8" stroke-width="0.7"/>
<rect x="385.84" y="321.5" width="3.8" height="0.8" fill="#f4f4f4"/>
<line x1="393.92" x2="393.92" y1="320" y2="323.5" stroke="#e8e8e8" stroke-width="0.7"/>
<rect x="392.02" y="321" width="3.8" height="0.8" fill="#f4f4f4"/>
<line x1="400.1" x2="400.1" y1="316.5" y2="321" stroke="#cfe8cf" stroke-width="0.7"/>
<rect x="398.35" y="317.25" width="3.5" height="3" fill="#16a01a" stroke="#9fe0a0" stroke-width="0.6"/>
<line x1="406.28" x2="406.28" y1="311.75" y2="318" stroke="#cfe8cf" stroke-width="0.7"/>
<rect x="404.53" y="312.75" width="3.5" height="4" fill="#16a01a" stroke="#9fe0a0" stroke-width="0.6"/>
<line x1="412.47" x2="412.47" y1="311" y2="314" stroke="#e8e8e8" stroke-width="0.7"/>
<rect x="410.57" y="312.25" width="3.8" height="0.8" fill="#f4f4f4"/>
<line x1="418.65" x2="418.65" y1="309.75" y2="312.5" stroke="#e8e8e8" stroke-width="0.7"/>
<rect x="416.75" y="311" width="3.8" height="0.8" fill="#f4f4f4"/>
<line x1="424.83" x2="424.83" y1="309.25" y2="314.5" stroke="#f0d0d0" stroke-width="0.7"/>
<rect x="423.08" y="310.75" width="3.5" height="3" fill="#e8243e" stroke="#f5a0aa" stroke-width="0.6"/>
<line x1="431.02" x2="431.02" y1="313.5" y2="316.5" stroke="#f0d8d8" stroke-width="0.7"/>
<rect x="429.27" y="314" width="3.5" height="1.75" fill="#f07080" stroke="#f8c0c8" stroke-width="0.6"/>
<line x1="437.2" x2="437.2" y1="314.75" y2="317.25" stroke="#f0d8d8" stroke-width="0.7"/>
<rect x="435.45" y="315.25" width="3.5" height="1.5" fill="#f07080" stroke="#f8c0c8" stroke-width="0.6"/>
<line x1="443.38" x2="443.38" y1="315.75" y2="326.5" stroke="#f0d0d0" stroke-width="0.7"/>
<rect x="441.63" y="317.5" width="3.5" height="8" fill="#e8243e" stroke="#f5a0aa" stroke-width="0.6"/>
<line x1="449.56" x2="449.56" y1="318.75" y2="325.25" stroke="#cfe8cf" stroke-width="0.7"/>
<rect x="447.81" y="321.25" width="3.5" height="3.25" fill="#16a01a" stroke="#9fe0a0" stroke-width="0.6"/>
<line x1="455.75" x2="455.75" y1="320.5" y2="328" stroke="#e8e8e8" stroke-width="0.7"/>
<rect x="453.85" y="321.5" width="3.8" height="0.8" fill="#f4f4f4"/>
<line x1="461.93" x2="461.93" y1="313.75" y2="323.25" stroke="#cfe8cf" stroke-width="0.7"/>
<rect x="460.18" y="314.75" width="3.5" height="7.75" fill="#16a01a" stroke="#9fe0a0" stroke-width="0.6"/>
<line x1="468.11" x2="468.11" y1="314" y2="317.25" stroke="#e8e8e8" stroke-width="0.7"/>
<rect x="466.21" y="315" width="3.8" height="0.8" fill="#f4f4f4"/>
<line x1="474.3" x2="474.3" y1="315" y2="318.25" stroke="#f0d8d8" stroke-width="0.7"/>
<rect x="472.55" y="315.5" width="3.5" height="2" fill="#f07080" stroke="#f8c0c8" stroke-width="0.6"/>
<line x1="480.48" x2="480.48" y1="315" y2="319.5" stroke="#e8e8e8" stroke-width="0.7"/>
<rect x="478.58" y="316" width="3.8" height="0.8" fill="#f4f4f4"/>
<line x1="486.66" x2="486.66" y1="308.5" y2="318" stroke="#cfe8cf" stroke-width="0.7"/>
<rect x="484.91" y="309.75" width="3.5" height="6.5" fill="#16a01a" stroke="#9fe0a0" stroke-width="0.6"/>
<line x1="492.85" x2="492.85" y1="310" y2="313.75" stroke="#f0d8d8" stroke-width="0.7"/>
<rect x="491.1" y="310.75" width="3.5" height="2.5" fill="#f07080" stroke="#f8c0c8" stroke-width="0.6"/>
<line x1="499.03" x2="499.03" y1="308.5" y2="313.25" stroke="#cfe8cf" stroke-width="0.7"/>
<rect x="497.28" y="309.25" width="3.5" height="3" fill="#16a01a" stroke="#9fe0a0" stroke-width="0.6"/>
<line x1="505.21" x2="505.21" y1="308.5" y2="312.75" stroke="#f0d0d0" stroke-width="0.7"/>
<rect x="503.46" y="309.25" width="3.5" height="2.75" fill="#e8243e" stroke="#f5a0aa" stroke-width="0.6"/>
<line x1="511.39" x2="511.39" y1="307.5" y2="313" stroke="#cfe8cf" stroke-width="0.7"/>
<rect x="509.64" y="309.5" width="3.5" height="2" fill="#16a01a" stroke="#9fe0a0" stroke-width="0.6"/>
<line x1="517.58" x2="517.58" y1="301.25" y2="310.5" stroke="#cfe8cf" stroke-width="0.7"/>
<rect x="515.83" y="306.25" width="3.5" height="3.25" fill="#16a01a" stroke="#9fe0a0" stroke-width="0.6"/>
<line x1="523.76" x2="523.76" y1="300" y2="306.5" stroke="#e8e8e8" stroke-width="0.7"/>
<rect x="521.86" y="304" width="3.8" height="0.8" fill="#f4f4f4"/>
<line x1="529.94" x2="529.94" y1="296.25" y2="308.25" stroke="#f0d0d0" stroke-width="0.7"/>
<rect x="528.19" y="304" width="3.5" height="3.5" fill="#e8243e" stroke="#f5a0aa" stroke-width="0.6"/>
<line x1="536.13" x2="536.13" y1="302.5" y2="309" stroke="#cfe8cf" stroke-width="0.7"/>
<rect x="534.38" y="304" width="3.5" height="3.5" fill="#16a01a" stroke="#9fe0a0" stroke-width="0.6"/>
<line x1="542.31" x2="542.31" y1="295.5" y2="305.25" stroke="#cfe8cf" stroke-width="0.7"/>
<rect x="540.56" y="300" width="3.5" height="4.5" fill="#16a01a" stroke="#9fe0a0" stroke-width="0.6"/>
<line x1="548.49" x2="548.49" y1="291.25" y2="300" stroke="#cfe8cf" stroke-width="0.7"/>
<rect x="546.74" y="292.5" width="3.5" height="6.75" fill="#16a01a" stroke="#9fe0a0" stroke-width="0.6"/>
<line x1="554.68" x2="554.68" y1="290" y2="295.5" stroke="#e8e8e8" stroke-width="0.7"/>
<rect x="552.78" y="292.25" width="3.8" height="0.8" fill="#f4f4f4"/>
<line x1="560.86" x2="560.86" y1="288.5" y2="295.5" stroke="#cfe8cf" stroke-width="0.7"/>
<rect x="559.11" y="289.5" width="3.5" height="3.25" fill="#16a01a" stroke="#9fe0a0" stroke-width="0.6"/>
<line x1="567.04" x2="567.04" y1="288" y2="290.75" stroke="#e8e8e8" stroke-width="0.7"/>
<rect x="565.14" y="289.25" width="3.8" height="0.8" fill="#f4f4f4"/>
<line x1="573.22" x2="573.22" y1="288" y2="295.75" stroke="#f0d8d8" stroke-width="0.7"/>
<rect x="571.47" y="289.25" width="3.5" height="0.8" fill="#f07080" stroke="#f8c0c8" stroke-width="0.6"/>
<line x1="579.41" x2="579.41" y1="286" y2="294" stroke="#cfe8cf" stroke-width="0.7"/>
<rect x="577.66" y="287" width="3.5" height="2.75" fill="#16a01a" stroke="#9fe0a0" stroke-width="0.6"/>
<line x1="585.59" x2="585.59" y1="284.5" y2="291.5" stroke="#e8e8e8" stroke-width="0.7"/>
<rect x="583.69" y="287.75" width="3.8" height="0.8" fill="#f4f4f4"/>
<line x1="591.77" x2="591.77" y1="283.75" y2="290" stroke="#e8e8e8" stroke-width="0.7"/>
<rect x="589.87" y="287.25" width="3.8" height="0.8" fill="#f4f4f4"/>
<line x1="597.96" x2="597.96" y1="283.75" y2="289" stroke="#cfe8cf" stroke-width="0.7"/>
<rect x="596.21" y="286.25" width="3.5" height="1.75" fill="#16a01a" stroke="#9fe0a0" stroke-width="0.6"/>
<line x1="604.14" x2="604.14" y1="280" y2="287.5" stroke="#cfe8cf" stroke-width="0.7"/>
<rect x="602.39" y="281.25" width="3.5" height="5" fill="#16a01a" stroke="#9fe0a0" stroke-width="0.6"/>
<line x1="610.32" x2="610.32" y1="275" y2="283" stroke="#cfe8cf" stroke-width="0.7"/>
<rect x="608.57" y="276.25" width="3.5" height="5.75" fill="#16a01a" stroke="#9fe0a0" stroke-width="0.6"/>
<line x1="616.51" x2="616.51" y1="274.5" y2="279.25" stroke="#f0d8d8" stroke-width="0.7"/>
<rect x="614.76" y="275.75" width="3.5" height="2.5" fill="#f07080" stroke="#f8c0c8" stroke-width="0.6"/>
<line x1="622.69" x2="622.69" y1="274.5" y2="280" stroke="#e8e8e8" stroke-width="0.7"/>
<rect x="620.79" y="277.25" width="3.8" height="0.8" fill="#f4f4f4"/>
<line x1="628.87" x2="628.87" y1="273.75" y2="283.75" stroke="#f0d0d0" stroke-width="0.7"/>
<rect x="627.12" y="277" width="3.5" height="5" fill="#e8243e" stroke="#f5a0aa" stroke-width="0.6"/>
<line x1="635.05" x2="635.05" y1="281" y2="288.5" stroke="#f0d0d0" stroke-width="0.7"/>
<rect x="633.3" y="281.75" width="3.5" height="5.75" fill="#e8243e" stroke="#f5a0aa" stroke-width="0.6"/>
<line x1="641.24" x2="641.24" y1="283" y2="290.5" stroke="#cfe8cf" stroke-width="0.7"/>
<rect x="639.49" y="284.25" width="3.5" height="3.25" fill="#16a01a" stroke="#9fe0a0" stroke-width="0.6"/>
<line x1="647.42" x2="647.42" y1="281" y2="287" stroke="#cfe8cf" stroke-width="0.7"/>
<rect x="645.67" y="282" width="3.5" height="2.5" fill="#16a01a" stroke="#9fe0a0" stroke-width="0.6"/>
<line x1="653.6" x2="653.6" y1="277.5" y2="284.25" stroke="#cfe8cf" stroke-width="0.7"/>
<rect x="651.85" y="278.25" width="3.5" height="4.25" fill="#16a01a" stroke="#9fe0a0" stroke-width="0.6"/>
<line x1="659.79" x2="659.79" y1="277.75" y2="283.25" stroke="#f0d8d8" stroke-width="0.7"/>
<rect x="658.04" y="278.75" width="3.5" height="3" fill="#f07080" stroke="#f8c0c8" stroke-width="0.6"/>
<line x1="665.97" x2="665.97" y1="276.25" y2="282.5" stroke="#cfe8cf" stroke-width="0.7"/>
<rect x="664.22" y="277" width="3.5" height="4.75" fill="#16a01a" stroke="#9fe0a0" stroke-width="0.6"/>
<line x1="672.15" x2="672.15" y1="276.25" y2="279.5" stroke="#e8e8e8" stroke-width="0.7"/>
<rect x="670.25" y="277.25" width="3.8" height="0.8" fill="#f4f4f4"/>
<line x1="678.34" x2="678.34" y1="276.25" y2="279" stroke="#e8e8e8" stroke-width="0.7"/>
<rect x="676.44" y="277.25" width="3.8" height="0.8" fill="#f4f4f4"/>
<line x1="684.52" x2="684.52" y1="274" y2="280" stroke="#cfe8cf" stroke-width="0.7"/>
<rect x="682.77" y="275" width="3.5" height="2.5" fill="#16a01a" stroke="#9fe0a0" stroke-width="0.6"/>
<line x1="690.7" x2="690.7" y1="271.25" y2="276" stroke="#cfe8cf" stroke-width="0.7"/>
<rect x="688.95" y="272" width="3.5" height="3" fill="#16a01a" stroke="#9fe0a0" stroke-width="0.6"/>
<line x1="696.88" x2="696.88" y1="269" y2="273" stroke="#e8e8e8" stroke-width="0.7"/>
<rect x="694.99" y="271" width="3.8" height="1" fill="#f4f4f4"/>
<line x1="703.07" x2="703.07" y1="271.25" y2="278" stroke="#f0d0d0" stroke-width="0.7"/>
<rect x="701.32" y="272" width="3.5" height="5" fill="#e8243e" stroke="#f5a0aa" stroke-width="0.6"/>
<line x1="709.25" x2="709.25" y1="273.75" y2="278.5" stroke="#cfe8cf" stroke-width="0.7"/>
<rect x="707.5" y="274.5" width="3.5" height="2.25" fill="#16a01a" stroke="#9fe0a0" stroke-width="0.6"/>
<line x1="715.43" x2="715.43" y1="268" y2="276" stroke="#cfe8cf" stroke-width="0.7"/>
<rect x="713.68" y="269.25" width="3.5" height="5.75" fill="#16a01a" stroke="#9fe0a0" stroke-width="0.6"/>
<line x1="721.62" x2="721.62" y1="268.5" y2="274.25" stroke="#f0d0d0" stroke-width="0.7"/>
<rect x="719.87" y="269.25" width="3.5" height="4.25" fill="#e8243e" stroke="#f5a0aa" stroke-width="0.6"/>
<line x1="727.8" x2="727.8" y1="270" y2="274" stroke="#e8e8e8" stroke-width="0.7"/>
<rect x="725.9" y="272.25" width="3.8" height="0.8" fill="#f4f4f4"/>
<line x1="733.98" x2="733.98" y1="268.75" y2="273.75" stroke="#cfe8cf" stroke-width="0.7"/>
<rect x="732.23" y="269.5" width="3.5" height="3.5" fill="#16a01a" stroke="#9fe0a0" stroke-width="0.6"/>
<line x1="740.17" x2="740.17" y1="266.25" y2="274.5" stroke="#f0d0d0" stroke-width="0.7"/>
<rect x="738.42" y="269.5" width="3.5" height="4.25" fill="#e8243e" stroke="#f5a0aa" stroke-width="0.6"/>
<line x1="746.35" x2="746.35" y1="268.75" y2="274.25" stroke="#cfe8cf" stroke-width="0.7"/>
<rect x="744.6" y="269.5" width="3.5" height="4" fill="#16a01a" stroke="#9fe0a0" stroke-width="0.6"/>
<line x1="752.53" x2="752.53" y1="267.5" y2="271.75" stroke="#cfe8cf" stroke-width="0.7"/>
<rect x="750.78" y="268.25" width="3.5" height="2" fill="#16a01a" stroke="#9fe0a0" stroke-width="0.6"/>
<line x1="758.72" x2="758.72" y1="263.75" y2="269" stroke="#cfe8cf" stroke-width="0.7"/>
<rect x="756.97" y="265.5" width="3.5" height="2.75" fill="#16a01a" stroke="#9fe0a0" stroke-width="0.6"/>
<line x1="764.9" x2="764.9" y1="264.75" y2="268.5" stroke="#f0d8d8" stroke-width="0.7"/>
<rect x="763.15" y="265.5" width="3.5" height="2.25" fill="#f07080" stroke="#f8c0c8" stroke-width="0.6"/>
<line x1="771.08" x2="771.08" y1="266" y2="268.5" stroke="#e8e8e8" stroke-width="0.7"/>
<rect x="769.18" y="266.75" width="3.8" height="0.8" fill="#f4f4f4"/>
<line x1="777.26" x2="777.26" y1="266" y2="271.25" stroke="#f0d0d0" stroke-width="0.7"/>
<rect x="775.51" y="266.75" width="3.5" height="3.75" fill="#e8243e" stroke="#f5a0aa" stroke-width="0.6"/>
<line x1="783.45" x2="783.45" y1="268.5" y2="275.5" stroke="#f0d0d0" stroke-width="0.7"/>
<rect x="781.7" y="270" width="3.5" height="4.75" fill="#e8243e" stroke="#f5a0aa" stroke-width="0.6"/>
<line x1="789.63" x2="789.63" y1="273.75" y2="281.25" stroke="#f0d8d8" stroke-width="0.7"/>
<rect x="787.88" y="274.5" width="3.5" height="1.75" fill="#f07080" stroke="#f8c0c8" stroke-width="0.6"/>
<line x1="795.81" x2="795.81" y1="272" y2="282.5" stroke="#f0d0d0" stroke-width="0.7"/>
<rect x="794.06" y="275.5" width="3.5" height="3.75" fill="#e8243e" stroke="#f5a0aa" stroke-width="0.6"/>
<line x1="802" x2="802" y1="274.5" y2="279.75" stroke="#cfe8cf" stroke-width="0.7"/>
<rect x="800.25" y="276.25" width="3.5" height="2.75" fill="#16a01a" stroke="#9fe0a0" stroke-width="0.6"/>
<line x1="808.18" x2="808.18" y1="272.5" y2="278" stroke="#e8e8e8" stroke-width="0.7"/>
<rect x="806.28" y="276.5" width="3.8" height="0.8" fill="#f4f4f4"/>
<line x1="814.36" x2="814.36" y1="275.5" y2="285" stroke="#f0d0d0" stroke-width="0.7"/>
<rect x="812.61" y="276.5" width="3.5" height="6.5" fill="#e8243e" stroke="#f5a0aa" stroke-width="0.6"/>
<line x1="820.54" x2="820.54" y1="277.5" y2="284.5" stroke="#cfe8cf" stroke-width="0.7"/>
<rect x="818.79" y="278.5" width="3.5" height="4.5" fill="#16a01a" stroke="#9fe0a0" stroke-width="0.6"/>
<line x1="826.73" x2="826.73" y1="278.5" y2="288" stroke="#f0d0d0" stroke-width="0.7"/>
<rect x="824.98" y="279.25" width="3.5" height="6.5" fill="#e8243e" stroke="#f5a0aa" stroke-width="0.6"/>
<line x1="832.91" x2="832.91" y1="282.25" y2="287.75" stroke="#cfe8cf" stroke-width="0.7"/>
<rect x="831.16" y="283" width="3.5" height="3.25" fill="#16a01a" stroke="#9fe0a0" stroke-width="0.6"/>
<line x1="839.09" x2="839.09" y1="273" y2="284.5" stroke="#cfe8cf" stroke-width="0.7"/>
<rect x="837.34" y="273.75" width="3.5" height="10" fill="#16a01a" stroke="#9fe0a0" stroke-width="0.6"/>
<line x1="845.28" x2="845.28" y1="271.75" y2="280" stroke="#f0d0d0" stroke-width="0.7"/>
<rect x="843.53" y="273.75" width="3.5" height="5.25" fill="#e8243e" stroke="#f5a0aa" stroke-width="0.6"/>
<rect x="106.5" y="146.25" width="890.5" height="219.0" fill="none" stroke="#50555e" stroke-width="1"/>
<rect x="106" y="374.25" width="891" height="67.0" fill="#0f141c"/>
<line x1="106" x2="997" y1="393" y2="393" stroke="#565a61" stroke-width="1"/>
<line x1="106" x2="997" y1="423" y2="423" stroke="#565a61" stroke-width="1"/>
<line x1="517.4" x2="517.4" y1="374.25" y2="441.25" stroke="#474c55" stroke-width="0.8" stroke-dasharray="1,1.2"/>
<line x1="994.2" x2="994.2" y1="374.25" y2="441.25" stroke="#474c55" stroke-width="0.8" stroke-dasharray="1,1.2"/>
<line x1="106" x2="997" y1="408" y2="408" stroke="#3f6a99" stroke-width="1"/>
<rect x="107.8" y="407.4" width="3.4" height="1.2" fill="#5f8fc0" fill-opacity="0.55"/>
<rect x="113.98" y="407.4" width="3.4" height="1.2" fill="#5f8fc0" fill-opacity="0.55"/>
<rect x="120.17" y="407.4" width="3.4" height="1.2" fill="#5f8fc0" fill-opacity="0.55"/>
<rect x="138.72" y="407.4" width="3.4" height="1.2" fill="#5f8fc0" fill-opacity="0.55"/>
<rect x="144.9" y="407.4" width="3.4" height="1.2" fill="#5f8fc0" fill-opacity="0.55"/>
<rect x="157.26" y="407.4" width="3.4" height="1.2" fill="#5f8fc0" fill-opacity="0.55"/>
<rect x="163.45" y="407.4" width="3.4" height="1.2" fill="#5f8fc0" fill-opacity="0.55"/>
<rect x="175.81" y="407.4" width="3.4" height="1.2" fill="#5f8fc0" fill-opacity="0.55"/>
<rect x="188.18" y="407.4" width="3.4" height="1.2" fill="#5f8fc0" fill-opacity="0.55"/>
<rect x="200.55" y="407.4" width="3.4" height="1.2" fill="#5f8fc0" fill-opacity="0.55"/>
<rect x="219.09" y="407.4" width="3.4" height="1.2" fill="#5f8fc0" fill-opacity="0.55"/>
<rect x="237.64" y="407.4" width="3.4" height="1.2" fill="#5f8fc0" fill-opacity="0.55"/>
<rect x="256.19" y="407.4" width="3.4" height="1.2" fill="#5f8fc0" fill-opacity="0.55"/>
<rect x="262.38" y="407.4" width="3.4" height="1.2" fill="#5f8fc0" fill-opacity="0.55"/>
<rect x="274.74" y="407.4" width="3.4" height="1.2" fill="#5f8fc0" fill-opacity="0.55"/>
<rect x="305.66" y="407.4" width="3.4" height="1.2" fill="#5f8fc0" fill-opacity="0.55"/>
<rect x="318.02" y="407.4" width="3.4" height="1.2" fill="#5f8fc0" fill-opacity="0.55"/>
<rect x="336.57" y="407.4" width="3.4" height="1.2" fill="#5f8fc0" fill-opacity="0.55"/>
<rect x="342.75" y="407.4" width="3.4" height="1.2" fill="#5f8fc0" fill-opacity="0.55"/>
<rect x="348.94" y="407.4" width="3.4" height="1.2" fill="#5f8fc0" fill-opacity="0.55"/>
<rect x="361.3" y="407.4" width="3.4" height="1.2" fill="#5f8fc0" fill-opacity="0.55"/>
<rect x="373.67" y="407.4" width="3.4" height="1.2" fill="#5f8fc0" fill-opacity="0.55"/>
<rect x="379.85" y="407.4" width="3.4" height="1.2" fill="#5f8fc0" fill-opacity="0.55"/>
<rect x="386.04" y="407.4" width="3.4" height="1.2" fill="#5f8fc0" fill-opacity="0.55"/>
<rect x="392.22" y="407.4" width="3.4" height="1.2" fill="#5f8fc0" fill-opacity="0.55"/>
<rect x="447.87" y="407.4" width="3.4" height="1.2" fill="#5f8fc0" fill-opacity="0.55"/>
<rect x="484.96" y="407.4" width="3.4" height="1.2" fill="#5f8fc0" fill-opacity="0.55"/>
<rect x="503.51" y="407.4" width="3.4" height="1.2" fill="#5f8fc0" fill-opacity="0.55"/>
<rect x="509.69" y="407.4" width="3.4" height="1.2" fill="#5f8fc0" fill-opacity="0.55"/>
<rect x="515.68" y="384.75" width="3.8" height="23.25" fill="#4a4d54"/>
<rect x="515.68" y="396.5" width="3.8" height="11.5" fill="#a6eca6"/>
<rect x="521.86" y="386" width="3.8" height="22" fill="#4a4d54"/>
<rect x="521.86" y="406" width="3.8" height="2" fill="#a6eca6"/>
<rect x="528.04" y="406" width="3.8" height="2" fill="#4a4d54"/>
<rect x="528.04" y="408" width="3.8" height="2.25" fill="#e0202c"/>
<rect x="534.23" y="380.5" width="3.8" height="27.5" fill="#4a4d54"/>
<rect x="534.23" y="393" width="3.8" height="15" fill="#a6eca6"/>
<rect x="540.41" y="399.75" width="3.8" height="8.25" fill="#4a4d54"/>
<rect x="540.41" y="406.75" width="3.8" height="1.25" fill="#a6eca6"/>
<rect x="546.59" y="377.75" width="3.8" height="30.25" fill="#a6eca6"/>
<rect x="552.78" y="388.5" width="3.8" height="19.5" fill="#4a4d54"/>
<rect x="552.78" y="406.75" width="3.8" height="1.25" fill="#a6eca6"/>
<rect x="558.96" y="386.5" width="3.8" height="21.5" fill="#4a4d54"/>
<rect x="558.96" y="401.75" width="3.8" height="6.25" fill="#a6eca6"/>
<rect x="565.14" y="401" width="3.8" height="7" fill="#4a4d54"/>
<rect x="565.14" y="406.75" width="3.8" height="1.25" fill="#a6eca6"/>
<rect x="571.32" y="386" width="3.8" height="22" fill="#4a4d54"/>
<rect x="571.32" y="392.25" width="3.8" height="15.75" fill="#a6eca6"/>
<rect x="577.51" y="396.5" width="3.8" height="11.5" fill="#4a4d54"/>
<rect x="577.51" y="404.75" width="3.8" height="3.25" fill="#a6eca6"/>
<rect x="583.69" y="377.75" width="3.8" height="30.25" fill="#4a4d54"/>
<rect x="583.69" y="386.75" width="3.8" height="21.25" fill="#a6eca6"/>
<rect x="589.87" y="397.75" width="3.8" height="10.25" fill="#4a4d54"/>
<rect x="589.87" y="408" width="3.8" height="2.5" fill="#e0202c"/>
<rect x="596.06" y="403.5" width="3.8" height="4.5" fill="#4a4d54"/>
<rect x="596.06" y="408" width="3.8" height="1" fill="#e0202c"/>
<rect x="602.24" y="403.5" width="3.8" height="4.5" fill="#4a4d54"/>
<rect x="602.24" y="404.25" width="3.8" height="3.75" fill="#a6eca6"/>
<rect x="608.42" y="394.75" width="3.8" height="13.25" fill="#a6eca6"/>
<rect x="614.61" y="403" width="3.8" height="5" fill="#4a4d54"/>
<rect x="620.79" y="401" width="3.8" height="7" fill="#a6eca6"/>
<rect x="626.97" y="408" width="3.8" height="6.75" fill="#f8c8d0"/>
<rect x="633.15" y="406" width="3.8" height="2" fill="#4a4d54"/>
<rect x="633.15" y="406.5" width="3.8" height="1.5" fill="#a6eca6"/>
<rect x="639.34" y="405.25" width="3.8" height="2.75" fill="#a6eca6"/>
<rect x="645.52" y="396" width="3.8" height="12" fill="#4a4d54"/>
<rect x="645.52" y="405.5" width="3.8" height="2.5" fill="#a6eca6"/>
<rect x="651.7" y="393" width="3.8" height="15" fill="#4a4d54"/>
<rect x="651.7" y="403" width="3.8" height="5" fill="#a6eca6"/>
<rect x="657.89" y="403.5" width="3.8" height="4.5" fill="#4a4d54"/>
<rect x="657.89" y="408" width="3.8" height="2.5" fill="#e0202c"/>
<rect x="664.07" y="382.25" width="3.8" height="25.75" fill="#4a4d54"/>
<rect x="664.07" y="398.5" width="3.8" height="9.5" fill="#a6eca6"/>
<rect x="670.25" y="408" width="3.8" height="1.75" fill="#e0202c"/>
<rect x="676.44" y="399.25" width="3.8" height="8.75" fill="#4a4d54"/>
<rect x="676.44" y="408" width="3.8" height="1.5" fill="#e0202c"/>
<rect x="682.62" y="400.25" width="3.8" height="7.75" fill="#4a4d54"/>
<rect x="682.62" y="407.25" width="3.8" height="0.75" fill="#a6eca6"/>
<rect x="688.8" y="390.25" width="3.8" height="17.75" fill="#4a4d54"/>
<rect x="688.8" y="401" width="3.8" height="7" fill="#a6eca6"/>
<rect x="694.99" y="402.75" width="3.8" height="5.25" fill="#4a4d54"/>
<rect x="694.99" y="408" width="3.8" height="1.75" fill="#e0202c"/>
<rect x="701.17" y="402.25" width="3.8" height="5.75" fill="#4a4d54"/>
<rect x="707.35" y="401" width="3.8" height="7" fill="#4a4d54"/>
<rect x="707.35" y="406" width="3.8" height="2" fill="#a6eca6"/>
<rect x="713.53" y="401" width="3.8" height="7" fill="#4a4d54"/>
<rect x="713.53" y="406" width="3.8" height="2" fill="#a6eca6"/>
<rect x="719.72" y="408" width="3.8" height="2" fill="#e0202c"/>
<rect x="725.9" y="399.25" width="3.8" height="8.75" fill="#4a4d54"/>
<rect x="725.9" y="404.25" width="3.8" height="3.75" fill="#a6eca6"/>
<rect x="732.08" y="400.25" width="3.8" height="7.75" fill="#4a4d54"/>
<rect x="732.08" y="403.5" width="3.8" height="4.5" fill="#a6eca6"/>
<rect x="738.27" y="408" width="3.8" height="2.25" fill="#e0202c"/>
<rect x="744.45" y="405.5" width="3.8" height="2.5" fill="#a6eca6"/>
<rect x="750.63" y="407.25" width="3.8" height="0.75" fill="#4a4d54"/>
<rect x="756.82" y="394.75" width="3.8" height="13.25" fill="#4a4d54"/>
<rect x="756.82" y="401.75" width="3.8" height="6.25" fill="#a6eca6"/>
<rect x="763" y="408" width="3.8" height="1" fill="#e8d8d8"/>
<rect x="769.18" y="401" width="3.8" height="7" fill="#4a4d54"/>
<rect x="769.18" y="406.5" width="3.8" height="1.5" fill="#a6eca6"/>
<rect x="775.36" y="408" width="3.8" height="3" fill="#4a4d54"/>
<rect x="781.55" y="405.25" width="3.8" height="2.75" fill="#4a4d54"/>
<rect x="781.55" y="406.75" width="3.8" height="1.25" fill="#a6eca6"/>
<rect x="787.73" y="408" width="3.8" height="1" fill="#e0202c"/>
<rect x="793.91" y="408" width="3.8" height="3.5" fill="#e8d8d8"/>
<rect x="800.1" y="401" width="3.8" height="7" fill="#4a4d54"/>
<rect x="800.1" y="405.5" width="3.8" height="2.5" fill="#a6eca6"/>
<rect x="806.28" y="406.75" width="3.8" height="1.25" fill="#a6eca6"/>
<rect x="812.46" y="408" width="3.8" height="3.75" fill="#f8c8d0"/>
<rect x="818.64" y="396" width="3.8" height="12" fill="#4a4d54"/>
<rect x="818.64" y="399.25" width="3.8" height="8.75" fill="#a6eca6"/>
<rect x="824.83" y="408" width="3.8" height="4.75" fill="#f8c8d0"/>
<rect x="831.01" y="398.5" width="3.8" height="9.5" fill="#4a4d54"/>
<rect x="831.01" y="406.75" width="3.8" height="1.25" fill="#a6eca6"/>
<rect x="837.19" y="384.75" width="3.8" height="23.25" fill="#4a4d54"/>
<rect x="837.19" y="395.5" width="3.8" height="12.5" fill="#a6eca6"/>
<rect x="843.38" y="408" width="3.8" height="3.5" fill="#f8c8d0"/>
<polyline points="518,406.5 525,404.75 536.5,401 548.75,397.25 561,395.5 573.5,394 582.5,391 587.5,387.25 600,388 610,385.5 622.5,384.25 635,385 650,384 660,383.5 666.25,382.5 675,382.75 690,382 700,382.5 725,381 750,380.25 775,379.75 800,379.5 815,379.5 820,378.5 830,378.25 837.5,377.25 845.25,377" fill="none" stroke="#1f8a25" stroke-width="0.8" stroke-opacity="0.95" stroke-linejoin="round" />
<polyline points="518,406.5 530,404.75 542.5,401 555,398 567.5,396.5 580,393.5 587.5,392.25 600,391.75 612.5,391 625,390.5 642.5,390.25 655,388 670,386 685,384.75 700,383.5 725,381.75 750,380.75 775,380 800,379.75 815,379.75 820,378.75 830,378.5 837.5,377.5 845.25,377" fill="none" stroke="#b02424" stroke-width="0.8" stroke-opacity="0.95" stroke-linejoin="round" />
<rect x="106.5" y="374.25" width="890.5" height="67.0" fill="none" stroke="#70747a" stroke-width="1"/>
<rect x="106" y="450.5" width="891" height="67.0" fill="#0f141c"/>
<line x1="106" x2="997" y1="469" y2="469" stroke="#565a61" stroke-width="1"/>
<line x1="106" x2="997" y1="499.25" y2="499.25" stroke="#565a61" stroke-width="1"/>
<line x1="517.4" x2="517.4" y1="450.5" y2="517.5" stroke="#474c55" stroke-width="0.8" stroke-dasharray="1,1.2"/>
<line x1="994.2" x2="994.2" y1="450.5" y2="517.5" stroke="#474c55" stroke-width="0.8" stroke-dasharray="1,1.2"/>
<line x1="106" x2="997" y1="484.25" y2="484.25" stroke="#565a61" stroke-width="1"/>
<rect x="107.6" y="484.25" width="3.8" height="30" fill="#ffa50a"/>
<rect x="113.78" y="484.25" width="3.8" height="21" fill="#ffa50a"/>
<rect x="119.97" y="484.25" width="3.8" height="10" fill="#ffa50a"/>
<rect x="126.15" y="484.25" width="3.8" height="8" fill="#ffa50a"/>
<rect x="132.33" y="482.25" width="3.8" height="2" fill="#ffa50a"/>
<rect x="138.51" y="483.95" width="3.8" height="0.3" fill="#ffa50a"/>
<rect x="144.7" y="478.85" width="3.8" height="5.4" fill="#ffa50a"/>
<rect x="150.88" y="479.75" width="3.8" height="4.5" fill="#ffa50a"/>
<rect x="157.06" y="478.85" width="3.8" height="5.4" fill="#ffa50a"/>
<rect x="163.25" y="478.45" width="3.8" height="5.8" fill="#ffa50a"/>
<rect x="169.43" y="480.25" width="3.8" height="4" fill="#ffa50a"/>
<rect x="175.61" y="482.95" width="3.8" height="1.3" fill="#ffa50a"/>
<rect x="181.8" y="484.25" width="3.8" height="3" fill="#ffa50a"/>
<rect x="187.98" y="484.25" width="3.8" height="2.7" fill="#ffa50a"/>
<rect x="194.16" y="484.25" width="3.8" height="5.4" fill="#ffa50a"/>
<rect x="200.34" y="483.75" width="3.8" height="0.5" fill="#ffa50a"/>
<rect x="206.53" y="477.95" width="3.8" height="6.3" fill="#ffa50a"/>
<rect x="212.71" y="478.45" width="3.8" height="5.8" fill="#ffa50a"/>
<rect x="218.89" y="474.25" width="3.8" height="10" fill="#ffa50a"/>
<rect x="225.08" y="470.25" width="3.8" height="14" fill="#ffa50a"/>
<rect x="231.26" y="470.75" width="3.8" height="13.5" fill="#ffa50a"/>
<rect x="237.44" y="468.95" width="3.8" height="15.3" fill="#ffa50a"/>
<rect x="243.63" y="465.85" width="3.8" height="18.4" fill="#ffa50a"/>
<rect x="249.81" y="464.95" width="3.8" height="19.3" fill="#ffa50a"/>
<rect x="255.99" y="465.85" width="3.8" height="18.4" fill="#ffa50a"/>
<rect x="262.18" y="471.65" width="3.8" height="12.6" fill="#ffa50a"/>
<rect x="268.36" y="467.65" width="3.8" height="16.6" fill="#ffa50a"/>
<rect x="274.54" y="468.05" width="3.8" height="16.2" fill="#ffa50a"/>
<rect x="280.72" y="469.45" width="3.8" height="14.8" fill="#ffa50a"/>
<rect x="286.91" y="466.75" width="3.8" height="17.5" fill="#ffa50a"/>
<rect x="293.09" y="467.25" width="3.8" height="17" fill="#ffa50a"/>
<rect x="299.27" y="474.35" width="3.8" height="9.9" fill="#ffa50a"/>
<rect x="305.46" y="473.45" width="3.8" height="10.8" fill="#ffa50a"/>
<rect x="311.64" y="477.95" width="3.8" height="6.3" fill="#ffa50a"/>
<rect x="317.82" y="475.75" width="3.8" height="8.5" fill="#ffa50a"/>
<rect x="324" y="475.75" width="3.8" height="8.5" fill="#ffa50a"/>
<rect x="330.19" y="476.65" width="3.8" height="7.6" fill="#ffa50a"/>
<rect x="336.37" y="484.25" width="3.8" height="5.4" fill="#ffa50a"/>
<rect x="342.55" y="484.25" width="3.8" height="3" fill="#ffa50a"/>
<rect x="348.74" y="484.25" width="3.8" height="9.4" fill="#ffa50a"/>
<rect x="354.92" y="480.25" width="3.8" height="4" fill="#ffa50a"/>
<rect x="361.1" y="484.25" width="3.8" height="0.8" fill="#ffa50a"/>
<rect x="367.29" y="484.25" width="3.8" height="2.7" fill="#ffa50a"/>
<rect x="373.47" y="484.25" width="3.8" height="0.3" fill="#ffa50a"/>
<rect x="379.65" y="484.25" width="3.8" height="4.5" fill="#ffa50a"/>
<rect x="385.84" y="484.25" width="3.8" height="0.8" fill="#ffa50a"/>
<rect x="392.02" y="484.05" width="3.8" height="0.2" fill="#ffa50a"/>
<rect x="398.2" y="484.25" width="3.8" height="0.3" fill="#ffa50a"/>
<rect x="404.38" y="484.25" width="3.8" height="13" fill="#ffa50a"/>
<rect x="410.57" y="479.25" width="3.8" height="5" fill="#ffa50a"/>
<rect x="416.75" y="477.55" width="3.8" height="6.7" fill="#ffa50a"/>
<rect x="422.93" y="482.95" width="3.8" height="1.3" fill="#ffa50a"/>
<rect x="429.12" y="478.45" width="3.8" height="5.8" fill="#ffa50a"/>
<rect x="435.3" y="481.25" width="3.8" height="3" fill="#ffa50a"/>
<rect x="441.48" y="477.05" width="3.8" height="7.2" fill="#ffa50a"/>
<rect x="447.67" y="481.55" width="3.8" height="2.7" fill="#ffa50a"/>
<rect x="453.85" y="482.95" width="3.8" height="1.3" fill="#ffa50a"/>
<rect x="460.03" y="478.85" width="3.8" height="5.4" fill="#ffa50a"/>
<rect x="466.21" y="484.25" width="3.8" height="4.5" fill="#ffa50a"/>
<rect x="472.4" y="480.25" width="3.8" height="4" fill="#ffa50a"/>
<rect x="478.58" y="476.25" width="3.8" height="8" fill="#ffa50a"/>
<rect x="484.76" y="474.35" width="3.8" height="9.9" fill="#ffa50a"/>
<rect x="490.95" y="484.25" width="3.8" height="0.6" fill="#ffa50a"/>
<rect x="497.13" y="483.95" width="3.8" height="0.3" fill="#ffa50a"/>
<rect x="503.31" y="477.25" width="3.8" height="7" fill="#ffa50a"/>
<rect x="509.5" y="470.25" width="3.8" height="14" fill="#ffa50a"/>
<rect x="515.68" y="483.95" width="3.8" height="0.3" fill="#ffa50a"/>
<rect x="521.86" y="473.25" width="3.8" height="11" fill="#ffa50a"/>
<rect x="528.04" y="484.25" width="3.8" height="4" fill="#ffa50a"/>
<rect x="534.23" y="484.25" width="3.8" height="2" fill="#ffa50a"/>
<rect x="540.41" y="481.25" width="3.8" height="3" fill="#ffa50a"/>
<rect x="546.59" y="481.25" width="3.8" height="3" fill="#ffa50a"/>
<rect x="552.78" y="482.75" width="3.8" height="1.5" fill="#ffa50a"/>
<rect x="558.96" y="482.25" width="3.8" height="2" fill="#ffa50a"/>
<rect x="565.14" y="480.25" width="3.8" height="4" fill="#ffa50a"/>
<rect x="571.32" y="480.25" width="3.8" height="4" fill="#ffa50a"/>
<rect x="577.51" y="483.25" width="3.8" height="1" fill="#ffa50a"/>
<rect x="583.69" y="483.95" width="3.8" height="0.3" fill="#ffa50a"/>
<rect x="589.87" y="484.25" width="3.8" height="7" fill="#ffa50a"/>
<rect x="596.06" y="476.75" width="3.8" height="7.5" fill="#ffa50a"/>
<rect x="602.24" y="482.25" width="3.8" height="2" fill="#ffa50a"/>
<rect x="608.42" y="484.25" width="3.8" height="5" fill="#ffa50a"/>
<rect x="614.61" y="484.25" width="3.8" height="3" fill="#ffa50a"/>
<rect x="620.79" y="482.75" width="3.8" height="1.5" fill="#ffa50a"/>
<rect x="626.97" y="481.25" width="3.8" height="3" fill="#ffa50a"/>
<rect x="633.15" y="479.25" width="3.8" height="5" fill="#ffa50a"/>
<rect x="639.34" y="484.25" width="3.8" height="7" fill="#ffa50a"/>
<rect x="645.52" y="481.25" width="3.8" height="3" fill="#ffa50a"/>
<rect x="651.7" y="484.25" width="3.8" height="0.5" fill="#ffa50a"/>
<rect x="657.89" y="484.25" width="3.8" height="0.5" fill="#ffa50a"/>
<rect x="664.07" y="482.75" width="3.8" height="1.5" fill="#ffa50a"/>
<rect x="670.25" y="482.75" width="3.8" height="1.5" fill="#ffa50a"/>
<rect x="676.44" y="481.75" width="3.8" height="2.5" fill="#ffa50a"/>
<rect x="682.62" y="484.25" width="3.8" height="1" fill="#ffa50a"/>
<rect x="688.8" y="484.25" width="3.8" height="5" fill="#ffa50a"/>
<rect x="694.99" y="484.25" width="3.8" height="2" fill="#ffa50a"/>
<rect x="701.17" y="484.25" width="3.8" height="0.7" fill="#ffa50a"/>
<rect x="707.35" y="484.25" width="3.8" height="0.2" fill="#ffa50a"/>
<rect x="713.53" y="484.25" width="3.8" height="0.7" fill="#ffa50a"/>
<rect x="719.72" y="484.25" width="3.8" height="2" fill="#ffa50a"/>
<rect x="725.9" y="484.25" width="3.8" height="2.5" fill="#ffa50a"/>
<rect x="732.08" y="484.25" width="3.8" height="11" fill="#ffa50a"/>
<rect x="738.27" y="484.25" width="3.8" height="2" fill="#ffa50a"/>
<rect x="744.45" y="484.25" width="3.8" height="2" fill="#ffa50a"/>
<rect x="750.63" y="484.25" width="3.8" height="0.5" fill="#ffa50a"/>
<rect x="756.82" y="476.75" width="3.8" height="7.5" fill="#ffa50a"/>
<rect x="763" y="484.05" width="3.8" height="0.2" fill="#ffa50a"/>
<rect x="769.18" y="482.55" width="3.8" height="1.7" fill="#ffa50a"/>
<rect x="775.36" y="484.25" width="3.8" height="0.7" fill="#ffa50a"/>
<rect x="781.55" y="484.25" width="3.8" height="0.7" fill="#ffa50a"/>
<rect x="787.73" y="482.55" width="3.8" height="1.7" fill="#ffa50a"/>
<rect x="793.91" y="484.25" width="3.8" height="0.7" fill="#ffa50a"/>
<rect x="800.1" y="482.75" width="3.8" height="1.5" fill="#ffa50a"/>
<rect x="806.28" y="484.25" width="3.8" height="0.5" fill="#ffa50a"/>
<rect x="812.46" y="481.75" width="3.8" height="2.5" fill="#ffa50a"/>
<rect x="818.64" y="482.05" width="3.8" height="2.2" fill="#ffa50a"/>
<rect x="824.83" y="480.75" width="3.8" height="3.5" fill="#ffa50a"/>
<rect x="831.01" y="484.25" width="3.8" height="9.5" fill="#ffa50a"/>
<rect x="837.19" y="484.05" width="3.8" height="0.2" fill="#ffa50a"/>
<rect x="843.38" y="484.05" width="3.8" height="0.2" fill="#ffa50a"/>
<polyline points="109.4,486.4 115.6,489.5 123.4,490.8 139,490.8 154.7,489.2 170.3,487.5 178,487.5 187.5,488.75 196.9,489.8 209.4,488.75 221.9,485.9 232.8,482.5 243.75,479.7 260,475.5 279.69,467.43 302.16,463.83 331.36,460.69 369.54,462.48 405.48,464.28 436.93,462.04 481.85,459.34 517.79,455.75 512.5,456.5 525,455.5 550,455.5 575,454 600,453.5 625,454.25 650,453.5 675,453.25 700,454 725,454.25 732.5,455.5 750,456 757.5,455 775,454.75 800,454.5 820,454 826.25,453.25 832.5,454.25 845.25,454.75" fill="none" stroke="#6f8fa6" stroke-width="0.7" stroke-opacity="0.9" stroke-linejoin="round" />
<polyline points="106,483.95 500,483.95 500,484.25 518,482.25 524,481.5 536.5,482.25 548.75,481.5 555,474 561,479.75 567.25,481 579.5,454 585.75,459.75 592,454 598.25,453.5 604.25,481 610.5,480.5 620,482.25 635,481.5 650,482.5 675,482.25 700,483.5 710,482.5 725,483.5 750,483 775,483 800,483 807.5,481.5 814.25,479 820,481.5 830,481.5 840,482.25 845.25,483.5" fill="none" stroke="#7448ad" stroke-width="0.8" stroke-opacity="0.95" stroke-linejoin="round" />
<rect x="106.5" y="450.5" width="890.5" height="67.0" fill="none" stroke="#70747a" stroke-width="1"/>
<rect x="106" y="526.25" width="891" height="67.75" fill="#0f141c"/>
<line x1="106" x2="997" y1="545.5" y2="545.5" stroke="#565a61" stroke-width="1"/>
<line x1="106" x2="997" y1="575.25" y2="575.25" stroke="#565a61" stroke-width="1"/>
<line x1="517.4" x2="517.4" y1="526.25" y2="594" stroke="#474c55" stroke-width="0.8" stroke-dasharray="1,1.2"/>
<line x1="994.2" x2="994.2" y1="526.25" y2="594" stroke="#474c55" stroke-width="0.8" stroke-dasharray="1,1.2"/>
<line x1="106" x2="997" y1="560.5" y2="560.5" stroke="#3f6a99" stroke-width="1"/>
<polygon points="820.5,560.5 825.5,530.5 833.5,560.5" fill="#2c3e55" fill-opacity="0.9"/>
<line x1="825.5" x2="825.5" y1="530.5" y2="560.5" stroke="#6cc4f5" stroke-width="1.4"/>
<polyline points="106,560.5 517.4,560.5 535,558.6 551,557.5 600,557 650,556.5 700,556 756,555.3 768,555 798,554.5 820.5,554 826,530 835,529.6 845.5,529" fill="none" stroke="#1c8238" stroke-width="0.8" stroke-opacity="1" stroke-linejoin="round" />
<rect x="106.5" y="526.25" width="890.5" height="67.75" fill="none" stroke="#70747a" stroke-width="1"/>
<text x="1004" y="181.4" font-size="5.8" font-weight="bold" fill="#f0f0f0" text-anchor="start">600</text>
<text x="1004" y="218.15" font-size="5.8" font-weight="bold" fill="#f0f0f0" text-anchor="start">598</text>
<text x="1004" y="255.15" font-size="5.8" font-weight="bold" fill="#f0f0f0" text-anchor="start">596</text>
<text x="1004" y="291.9" font-size="5.8" font-weight="bold" fill="#f0f0f0" text-anchor="start">594</text>
<text x="1004" y="328.15" font-size="5.8" font-weight="bold" fill="#f0f0f0" text-anchor="start">592</text>
<text x="1004" y="364.15" font-size="5.8" font-weight="bold" fill="#f0f0f0" text-anchor="start">590</text>
<text x="1004" y="391.4" font-size="5.8" font-weight="bold" fill="#f0f0f0" text-anchor="start">58.1M</text>
<text x="1004" y="406.4" font-size="5.8" font-weight="bold" fill="#f0f0f0" text-anchor="start">0.00</text>
<text x="1004" y="421.4" font-size="5.8" font-weight="bold" fill="#f0f0f0" text-anchor="start">-58.1M</text>
<text x="1004" y="439.4" font-size="5.8" font-weight="bold" fill="#f0f0f0" text-anchor="start">-0.1B</text>
<text x="1004" y="467.4" font-size="5.8" font-weight="bold" fill="#f0f0f0" text-anchor="start">17.4K</text>
<text x="1004" y="482.4" font-size="5.8" font-weight="bold" fill="#f0f0f0" text-anchor="start">0.00</text>
<text x="1004" y="497.9" font-size="5.8" font-weight="bold" fill="#f0f0f0" text-anchor="start">-17.4K</text>
<text x="1004" y="515.65" font-size="5.8" font-weight="bold" fill="#f0f0f0" text-anchor="start">-88.8K</text>
<text x="1004" y="543.4" font-size="5.8" font-weight="bold" fill="#f0f0f0" text-anchor="start">0.4B</text>
<text x="1004" y="558.9" font-size="5.8" font-weight="bold" fill="#f0f0f0" text-anchor="start">0.00</text>
<text x="1004" y="574.15" font-size="5.8" font-weight="bold" fill="#f0f0f0" text-anchor="start">-0.4B</text>
<text x="1004" y="592.15" font-size="5.8" font-weight="bold" fill="#f0f0f0" text-anchor="start">-0.9B</text>
<rect x="997.5" y="273.75" width="22.5" height="10.75" fill="#000"/>
<text x="1000" y="281.0" font-size="5.8" font-weight="bold" fill="#fff" text-anchor="start">594.74</text>
<rect x="112.5" y="606" width="877.5" height="18.3" fill="#2b3850"/>
<line x1="106" x2="997" y1="606.3" y2="606.3" stroke="#7d838d" stroke-width="0.8"/>
<line x1="180.25" x2="180.25" y1="606.5" y2="624" stroke="#3a4862" stroke-width="0.8"/>
<text x="181.85" y="623.2" font-size="5.6" font-weight="bold" fill="#e8ecf2" text-anchor="start">05:00</text>
<line x1="253.85" x2="253.85" y1="606.5" y2="624" stroke="#3a4862" stroke-width="0.8"/>
<text x="255.45" y="623.2" font-size="5.6" font-weight="bold" fill="#e8ecf2" text-anchor="start">06:00</text>
<line x1="327.45" x2="327.45" y1="606.5" y2="624" stroke="#3a4862" stroke-width="0.8"/>
<text x="329.05" y="623.2" font-size="5.6" font-weight="bold" fill="#e8ecf2" text-anchor="start">07:00</text>
<line x1="401.05" x2="401.05" y1="606.5" y2="624" stroke="#3a4862" stroke-width="0.8"/>
<text x="402.65" y="623.2" font-size="5.6" font-weight="bold" fill="#e8ecf2" text-anchor="start">08:00</text>
<line x1="474.65" x2="474.65" y1="606.5" y2="624" stroke="#3a4862" stroke-width="0.8"/>
<text x="476.25" y="623.2" font-size="5.6" font-weight="bold" fill="#e8ecf2" text-anchor="start">09:00</text>
<line x1="548.25" x2="548.25" y1="606.5" y2="624" stroke="#3a4862" stroke-width="0.8"/>
<text x="549.85" y="623.2" font-size="5.6" font-weight="bold" fill="#e8ecf2" text-anchor="start">10:00</text>
<line x1="621.85" x2="621.85" y1="606.5" y2="624" stroke="#3a4862" stroke-width="0.8"/>
<text x="623.45" y="623.2" font-size="5.6" font-weight="bold" fill="#e8ecf2" text-anchor="start">11:00</text>
<line x1="695.45" x2="695.45" y1="606.5" y2="624" stroke="#3a4862" stroke-width="0.8"/>
<text x="697.05" y="623.2" font-size="5.6" font-weight="bold" fill="#e8ecf2" text-anchor="start">12:00</text>
<line x1="769.05" x2="769.05" y1="606.5" y2="624" stroke="#3a4862" stroke-width="0.8"/>
<text x="770.65" y="623.2" font-size="5.6" font-weight="bold" fill="#e8ecf2" text-anchor="start">13:00</text>
<line x1="842.65" x2="842.65" y1="606.5" y2="624" stroke="#3a4862" stroke-width="0.8"/>
<text x="844.25" y="623.2" font-size="5.6" font-weight="bold" fill="#e8ecf2" text-anchor="start">14:00</text>
<line x1="916.25" x2="916.25" y1="606.5" y2="624" stroke="#3a4862" stroke-width="0.8"/>
<text x="917.85" y="623.2" font-size="5.6" font-weight="bold" fill="#e8ecf2" text-anchor="start">15:00</text>
<text x="991.8" y="623.2" font-size="5.6" font-weight="bold" fill="#e8ecf2" text-anchor="start">16:00</text>
<line x1="112.5" x2="112.5" y1="606" y2="624.3" stroke="#c8ccd2" stroke-width="0.8"/>
<rect x="110.5" y="611.75" width="4" height="7" rx="0.8" fill="#e8e8e8" stroke="#b0b0b0" stroke-width="0.4"/>
<line x1="990" x2="990" y1="606" y2="624.3" stroke="#c8ccd2" stroke-width="0.8"/>
<rect x="988" y="611.75" width="4" height="7" rx="0.8" fill="#e8e8e8" stroke="#b0b0b0" stroke-width="0.4"/>
<rect x="106" y="624.3" width="891" height="7.5" fill="#d2d2d2"/>
<rect x="106" y="624.3" width="6" height="7.5" fill="#f0f0f0"/>
<rect x="991" y="624.3" width="6" height="7.5" fill="#f0f0f0"/>
<polygon points="110,626.7 108,628.05 110,629.4" fill="#444"/>
<polygon points="993,626.7 995,628.05 993,629.4" fill="#444"/>
<line x1="550.75" x2="550.75" y1="626.5" y2="629.5" stroke="#999" stroke-width="0.5"/>
<line x1="551.75" x2="551.75" y1="626.5" y2="629.5" stroke="#999" stroke-width="0.5"/>
<line x1="552.75" x2="552.75" y1="626.5" y2="629.5" stroke="#999" stroke-width="0.5"/>
<line x1="383" x2="390" y1="642" y2="642" stroke="#7a4a40" stroke-width="1"/>
<text x="393" y="644.3" font-size="6.6" font-weight="bold" fill="#f4f4f4" textLength="34.4" lengthAdjust="spacingAndGlyphs">2022/08/02</text>
<line x1="438" x2="445" y1="642" y2="642" stroke="#7a7038" stroke-width="1"/>
<text x="448" y="644.3" font-size="6.6" font-weight="bold" fill="#f4f4f4" textLength="34.4" lengthAdjust="spacingAndGlyphs">2019/01/18</text>
<line x1="493" x2="500" y1="642" y2="642" stroke="#3a5f70" stroke-width="1"/>
<text x="503" y="644.3" font-size="6.6" font-weight="bold" fill="#f4f4f4" textLength="34.4" lengthAdjust="spacingAndGlyphs">2024/04/05</text>
<line x1="547.5" x2="554.5" y1="642" y2="642" stroke="#8a3a40" stroke-width="1"/>
<text x="557.5" y="644.3" font-size="6.6" font-weight="bold" fill="#f4f4f4" textLength="34.4" lengthAdjust="spacingAndGlyphs">2023/09/28</text>
<line x1="602.5" x2="609.5" y1="642" y2="642" stroke="#4a607a" stroke-width="1"/>
<text x="612.5" y="644.3" font-size="6.6" font-weight="bold" fill="#f4f4f4" textLength="34.4" lengthAdjust="spacingAndGlyphs">2023/10/17</text>
<line x1="657" x2="664" y1="642" y2="642" stroke="#8ab8d0" stroke-width="1"/>
<text x="667" y="644.3" font-size="6.6" font-weight="bold" fill="#f4f4f4" textLength="29.8" lengthAdjust="spacingAndGlyphs">SS Average</text>
<line x1="707" x2="714" y1="642" y2="642" stroke="#d08090" stroke-width="1"/>
<text x="717" y="644.3" font-size="6.6" font-weight="bold" fill="#f4f4f4" textLength="28.2" lengthAdjust="spacingAndGlyphs">SS Median</text>
</svg>
</body></html>
